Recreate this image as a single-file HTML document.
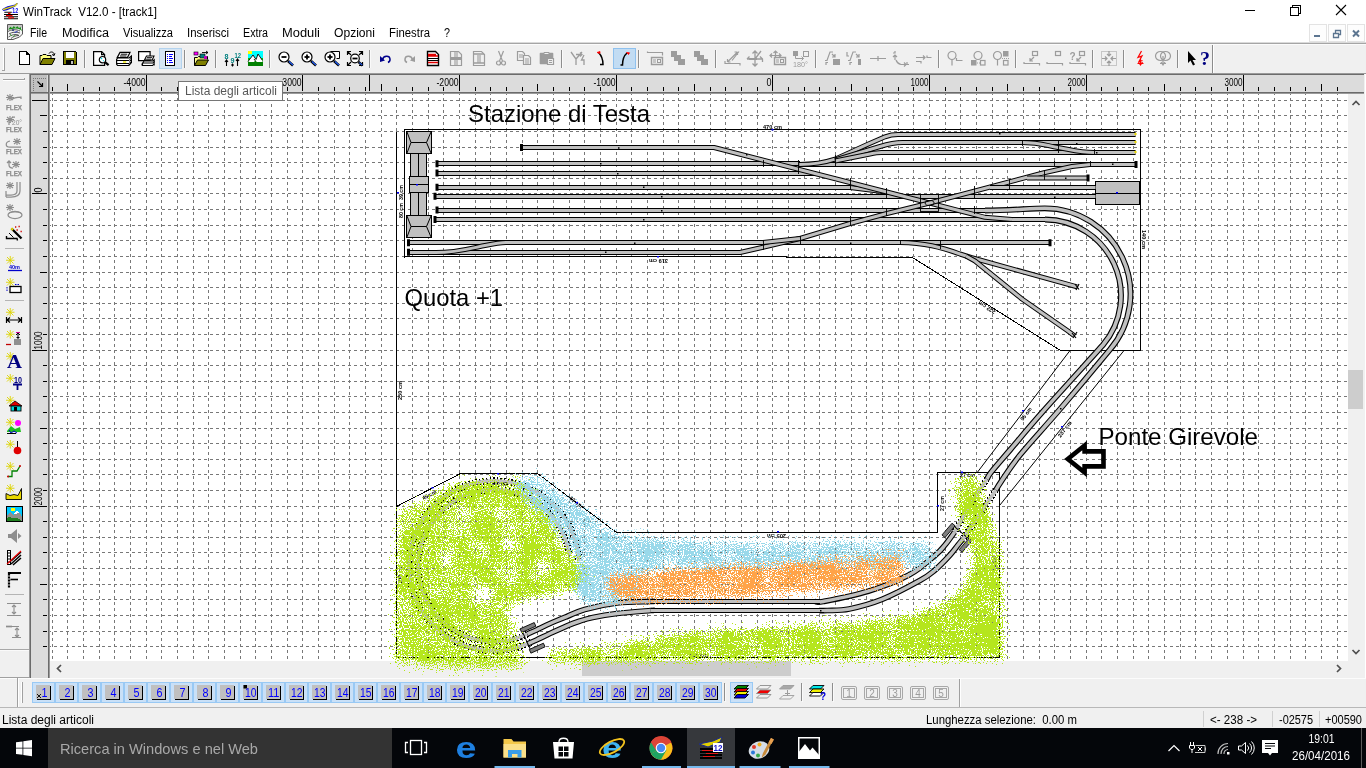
<!DOCTYPE html>
<html lang="it"><head><meta charset="utf-8"><title>WinTrack V12.0 - [track1]</title>
<style>
html,body{margin:0;padding:0;background:#fff;overflow:hidden}
svg{will-change:transform;display:block;position:absolute;left:0;top:0;font-family:"Liberation Sans", "DejaVu Sans", sans-serif}
</style></head><body>
<svg width="1366" height="768" viewBox="0 0 1366 768">
<rect x="0" y="0" width="1366" height="768" fill="#fff"/>
<g id="ticon"><path d="M4.300 12.300h7.500M4 14.500h14M4 16.700h14M4 18.700h14" stroke="#000" stroke-width="1.100" fill="none"/><path d="M8 13.400h2.500M6 15.600h6.500M8 17.700h6M9 18.300h2" stroke="#f00000" stroke-width="1.100" fill="none"/><path d="M2 9.200L4 8L7.500 6.300L12 5.200L15 4.600L16.600 3L18 3.400L15.500 6.300L12.600 8L7 10.300L3.400 10.900Z" fill="#1010d8"/><path d="M3 9.600L7.500 8.200L12.300 6.600L15.500 5.500L17.300 3.300" stroke="#e8e000" stroke-width="1.300" fill="none"/></g>
<text x="12.300" y="12.600" font-size="6.800" font-weight="bold" fill="#0000e0" textLength="5.800" lengthAdjust="spacingAndGlyphs">12</text>
<text x="23" y="16" font-size="12" fill="#000" text-anchor="start" textLength="134" lengthAdjust="spacingAndGlyphs">WinTrack&#160; V12.0 - [track1]</text>
<g stroke="#000" stroke-width="1" fill="none" shape-rendering="crispEdges"><path d="M1245 10.5h10"/><path d="M1290.5 7.5h8v8h-8z M1292.5 7.5v-2h8v8h-2"/></g>
<path d="M1336 5l10 10M1346 5l-10 10" stroke="#000" stroke-width="1.1" fill="none"/>
<g><path d="M7.500 24.500H22.500V34L19.500 37L13 39.500H7.500Z" fill="#f4f4f4" stroke="#555" stroke-width="1"/><path d="M8 24.900h14v2.500l-2 .8-2-1.300-2 .8-2.500-1.500-2.500 1.500-3 1.800z" fill="#c4c4c4"/><path d="M8 29.800l2.500-3 1.500 1.200 1.800-2 1.700 1.700 1.800-1.500 1.800 1.800 1.500-1 1.400 4-1.500-1.200-2.500-1-3-.2-3 .5z" fill="#1a8a1a"/><path d="M8 31.500c3-2 8-2.500 12-.5M9 34c3-2 7-2.500 11-1M8.500 37c3-2.500 7-3 10-2M11 38.500c2-2 5-3 8-3" fill="none" stroke="#444" stroke-width=".9"/><path d="M12 29.500h2v1.200h-2z" fill="#102070"/><path d="M14.500 32.500l3-1" stroke="#2030c0" stroke-width="1"/><path d="M10 34l2 2M13 36.500l2-1" stroke="#2a9a2a" stroke-width=".8"/></g>
<text x="30" y="37" font-size="12" fill="#000" text-anchor="start" textLength="17" lengthAdjust="spacingAndGlyphs">File</text>
<text x="62" y="37" font-size="12" fill="#000" text-anchor="start" textLength="47" lengthAdjust="spacingAndGlyphs">Modifica</text>
<text x="123" y="37" font-size="12" fill="#000" text-anchor="start" textLength="50" lengthAdjust="spacingAndGlyphs">Visualizza</text>
<text x="187" y="37" font-size="12" fill="#000" text-anchor="start" textLength="42" lengthAdjust="spacingAndGlyphs">Inserisci</text>
<text x="243" y="37" font-size="12" fill="#000" text-anchor="start" textLength="25" lengthAdjust="spacingAndGlyphs">Extra</text>
<text x="282" y="37" font-size="12" fill="#000" text-anchor="start" textLength="38" lengthAdjust="spacingAndGlyphs">Moduli</text>
<text x="334" y="37" font-size="12" fill="#000" text-anchor="start" textLength="41" lengthAdjust="spacingAndGlyphs">Opzioni</text>
<text x="389" y="37" font-size="12" fill="#000" text-anchor="start" textLength="41" lengthAdjust="spacingAndGlyphs">Finestra</text>
<text x="444" y="37" font-size="12" fill="#000" text-anchor="start" textLength="6" lengthAdjust="spacingAndGlyphs">?</text>
<rect x="1309.5" y="24.5" width="17" height="17" fill="#fdfdfd" stroke="#e3e3e3"/>
<rect x="1328.5" y="24.5" width="17" height="17" fill="#fdfdfd" stroke="#e3e3e3"/>
<rect x="1347.5" y="24.5" width="17" height="17" fill="#fdfdfd" stroke="#e3e3e3"/>
<g stroke="#5c7590" fill="none"><path d="M1314 36h6" stroke-width="2"/><path d="M1333.5 33.5h5v4h-5z M1335.5 33v-2.5h5v4h-2" stroke-width="1.3"/><path d="M1353 30.5l6 6M1359 30.5l-6 6" stroke-width="2"/></g>
<rect x="0" y="42" width="1366" height="32" fill="#f0f0f0"/>
<rect x="0" y="42" width="1366" height="1" fill="#dadada"/>
<rect x="0" y="43" width="1366" height="1" fill="#a5a5a5"/>
<rect x="0" y="44" width="1366" height="1" fill="#fbfbfb"/>
<rect x="0" y="73" width="1366" height="1" fill="#9a9a9a"/>
<rect x="3" y="48" width="1" height="22" fill="#fff"/><rect x="4" y="48" width="1" height="22" fill="#a0a0a0"/>
<rect x="2" y="70" width="3" height="1" fill="#a0a0a0"/>
<rect x="1212" y="45" width="1" height="28" fill="#8c8c8c"/><rect x="1213" y="45" width="1" height="28" fill="#fff"/>
<rect x="84" y="50" width="1" height="18" fill="#8e8e8e"/><rect x="85" y="50" width="1" height="18" fill="#fafafa"/>
<rect x="184" y="50" width="1" height="18" fill="#8e8e8e"/><rect x="185" y="50" width="1" height="18" fill="#fafafa"/>
<rect x="215" y="50" width="1" height="18" fill="#8e8e8e"/><rect x="216" y="50" width="1" height="18" fill="#fafafa"/>
<rect x="269" y="50" width="1" height="18" fill="#8e8e8e"/><rect x="270" y="50" width="1" height="18" fill="#fafafa"/>
<rect x="369" y="50" width="1" height="18" fill="#8e8e8e"/><rect x="370" y="50" width="1" height="18" fill="#fafafa"/>
<rect x="561" y="50" width="1" height="18" fill="#8e8e8e"/><rect x="562" y="50" width="1" height="18" fill="#fafafa"/>
<rect x="638" y="50" width="1" height="18" fill="#8e8e8e"/><rect x="639" y="50" width="1" height="18" fill="#fafafa"/>
<rect x="715" y="50" width="1" height="18" fill="#8e8e8e"/><rect x="716" y="50" width="1" height="18" fill="#fafafa"/>
<rect x="815" y="50" width="1" height="18" fill="#8e8e8e"/><rect x="816" y="50" width="1" height="18" fill="#fafafa"/>
<rect x="938" y="50" width="1" height="18" fill="#8e8e8e"/><rect x="939" y="50" width="1" height="18" fill="#fafafa"/>
<rect x="1015" y="50" width="1" height="18" fill="#8e8e8e"/><rect x="1016" y="50" width="1" height="18" fill="#fafafa"/>
<rect x="1092" y="50" width="1" height="18" fill="#8e8e8e"/><rect x="1093" y="50" width="1" height="18" fill="#fafafa"/>
<rect x="1123" y="50" width="1" height="18" fill="#8e8e8e"/><rect x="1124" y="50" width="1" height="18" fill="#fafafa"/>
<rect x="1177" y="50" width="1" height="18" fill="#8e8e8e"/><rect x="1178" y="50" width="1" height="18" fill="#fafafa"/>
<rect x="159.5" y="48.5" width="22" height="20" fill="#d5e5f3" stroke="#b4d3ee"/>
<rect x="613.5" y="48.5" width="22" height="20" fill="#c2dcf3" stroke="#8fc1ee"/>
<g transform="translate(16.5,51)" shape-rendering="crispEdges"><path d="M2.5 .5h7l3 3v10h-10z" fill="#fff" stroke="#000"/><path d="M9.5 .5v3h3" fill="none" stroke="#000"/></g>
<g transform="translate(39.5,51)"><path d="M.5 13.500v-9h2l1-1h3l1 1h4v3" fill="#ffff80" stroke="#000"/><path d="M.5 13.5l3-6h12l-3 6z" fill="#808000" stroke="#000"/><path d="M9.5 2.5c1-2 4-2 5 0l0 2m-2-1l2 1 1-2" fill="none" stroke="#000"/></g>
<g transform="translate(62,51)" shape-rendering="crispEdges"><path d="M1.5 .5h12l1 1v12h-13z" fill="#808000" stroke="#000"/><rect x="4" y="1" width="8" height="6" fill="#fff"/><rect x="4" y="9" width="8" height="4" fill="#000"/><rect x="9" y="10" width="2" height="3" fill="#c0c0c0"/></g>
<g transform="translate(93,51)"><path d="M.6 .6h8l3 3v10.800h-11z" fill="#fff" stroke="#000" stroke-width="1.200"/><path d="M8.600 .6v3h3" fill="none" stroke="#000" stroke-width="1.200"/><circle cx="9.500" cy="8.700" r="3.200" fill="#fff" stroke="#000" stroke-width="1.200"/><path d="M8 8l1-1M10 10l.8-.5" stroke="#00e0f0" stroke-width="1.300"/><path d="M12 11.200l3.600 3" stroke="#000" stroke-width="2.200"/></g>
<g transform="translate(116,51)"><path d="M1.200 6.600l2.800-5.200h10l-2.600 5.200z" fill="#fff" stroke="#000" stroke-width="1.200"/><path d="M4.800 3.200h6.500M4 5h6.500" stroke="#000" stroke-width="1"/><path d="M.6 8.500l1-1.500h11.600l2.200-2v6.500l-2.500 3h-11.300l-1-1.200z" fill="#fff" stroke="#000" stroke-width="1.200"/><path d="M.6 9.500h12.600M1 12.500h12M13 9.500l2.300-2.500M12.900 14l2.300-2.800M13.500 10.500l1.500-1.500M13.500 12l1.500-1.500" stroke="#000" stroke-width="1" fill="none"/><path d="M7 11h3.200" stroke="#f0e800" stroke-width="1.400"/></g>
<g transform="translate(139,51)"><path d="M-.4 .6h11.500v9h-11.500z" fill="#fff" stroke="#000" stroke-width="1.200"/><path d="M5.500 9l2-4h7.500l-1.800 4z" fill="#fff" stroke="#000" stroke-width="1.100"/><path d="M8 6.500h5M7.300 8h5" stroke="#000" stroke-width=".8"/><path d="M3.500 12.500l1.500-2.500h9l1.200-1.200v3.500l-1.500 2.200h-10.200z" fill="#fff" stroke="#000" stroke-width="1.100"/><path d="M3.500 12h10.500M14 12l1.200-1.500M3 14.500v-2M15.200 14.500v-1.500" stroke="#000" stroke-width="1" fill="none"/></g>
<g transform="translate(162,51)" shape-rendering="crispEdges"><path d="M3.500 .5h9v14h-9z" fill="#fff" stroke="#000"/><path d="M5 3h1M7 3h4M5 5h1M7 5h3M5 7h1M7 7h4M5 9h1M7 9h3M5 11h1M7 11h4" stroke="#00f" stroke-width="1"/></g>
<g transform="translate(193,51)"><path d="M1.500 14.500v-8h3l1-1h9v3" fill="#ffff80" stroke="#000"/><path d="M1.500 14.500l3-5.500h11l-3 5.500z" fill="#808000" stroke="#000"/><rect x="1" y="1" width="4" height="3" fill="#f0f" stroke="#000" stroke-width=".6"/><rect x="7" y="3" width="5" height="4" fill="#008080" stroke="#000" stroke-width=".6"/><rect x="11" y="5" width="3" height="3" fill="#c000c0"/><path d="M9 1.500h6m-2-1.500l2 1.500-2 1.500" fill="none" stroke="#000" stroke-width=".9"/></g>
<g font-size="7" font-weight="bold" fill="#008080"><text x="224.500" y="59" textLength="4" lengthAdjust="spacingAndGlyphs">8</text><text x="230.500" y="63" textLength="4" lengthAdjust="spacingAndGlyphs">9</text><text x="234.500" y="58" textLength="6.500" lengthAdjust="spacingAndGlyphs">12</text></g>
<path d="M226.500 66v-6m-1.500 2l1.500-2 1.500 2M237.500 66v-7m-1.500 2l1.500-2 1.500 2M232.500 63.500v3m-1.500-1.500h3" stroke="#000" fill="none" stroke-width="1.100"/>
<g transform="translate(247,51)"><rect x="1" y="0" width="15" height="15" fill="#00c000"/><rect x="1" y="0" width="15" height="7" fill="#0ff"/><rect x="1" y="0" width="4" height="3" fill="#ff0"/><path d="M1 10l5-6 3 4 2-5 5 7v1h-15z" fill="#fff"/><path d="M1 10.500l5-6.500 3 4.500 2-5.500 4.500 6.500M7 8l3 4" fill="none" stroke="#000" stroke-width=".9"/><rect x="1" y="10" width="15" height="5" fill="#008000"/><path d="M1 11l4-3 3 3M9 11l3-4 4 4z" fill="#fff"/></g>
<g transform="translate(278,51)"><circle cx="6" cy="6" r="5" fill="#fff" stroke="#000" stroke-width="1.200"/><path d="M3.500 6h5" stroke="#000" stroke-width="1.800"/><path d="M10 10l5 4.500" stroke="#000" stroke-width="2.600"/><path d="M11 10.500l4 3.600" stroke="#2060ff" stroke-width="1.200"/></g>
<g transform="translate(301,51)"><circle cx="6" cy="6" r="5" fill="#fff" stroke="#000" stroke-width="1.200"/><path d="M3.500 6h5" stroke="#000" stroke-width="1.800"/><path d="M6 3.500v5" stroke="#000" stroke-width="1.800"/><path d="M10 10l5 4.500" stroke="#000" stroke-width="2.600"/><path d="M11 10.500l4 3.600" stroke="#2060ff" stroke-width="1.200"/></g>
<g transform="translate(324,51)"><path d="M6.500 .5h9v7h-3" fill="#fff" stroke="#000"/><circle cx="6" cy="6" r="5" fill="#fff" stroke="#000" stroke-width="1.200"/><path d="M3.500 6h5" stroke="#000" stroke-width="1.800"/><path d="M6 3.500v5" stroke="#000" stroke-width="1.800"/><path d="M10 10l5 4.500" stroke="#000" stroke-width="2.600"/><path d="M11 10.500l4 3.600" stroke="#2060ff" stroke-width="1.200"/></g>
<g transform="translate(347,51)"><path d="M.5 4v-3.500h3.500M12 .5h3.500v3.500M15.500 11v3.500h-3.500M4 14.500h-3.500v-3.500M1 1l3 3M15 1l-3 3M1 14l3-3" fill="none" stroke="#000" stroke-width="1.200"/><circle cx="8" cy="7.500" r="4.300" fill="#fff" stroke="#000" stroke-width="1.200"/><path d="M5.500 7.500h5" stroke="#000" stroke-width="1.800"/><path d="M11.500 11l4 3.500" stroke="#000" stroke-width="2.400"/><path d="M12.300 11.600l3 2.600" stroke="#2060ff" stroke-width="1.100"/></g>
<g transform="translate(378,51)"><path d="M4.500 8.500c1-4 7-4.500 7.500-.5c.3 2-1 3-2 3.500" fill="none" stroke="#00008b" stroke-width="1.500"/><path d="M2 5l0 6 5-1.500z" fill="#00008b"/></g>
<g transform="translate(401,51)"><path d="M11.500 8.500c-1-4-7-4.500-7.500-.5c-.3 2 1 3 2 3.500" fill="none" stroke="#9c9c9c" stroke-width="1.500"/><path d="M14 5l0 6-5-1.500z" fill="#9c9c9c"/></g>
<g transform="translate(425,51)"><path d="M2.500 .5h8l3 3v11h-11z" fill="#fff" stroke="#000" stroke-width="1.400"/><path d="M3 3.500h8M3 5h10M3 11.500h10" stroke="#e00000" stroke-width="1.600"/><path d="M3 7.500h10M3 9.500h10" stroke="#000" stroke-width="1"/></g>
<g transform="translate(448,51)"><path d="M2.500 .5h8l3 3v11h-11z" fill="#f0f0f0" stroke="#9c9c9c" stroke-width="1.200"/><path d="M3 6h10v3h-10z" fill="#9c9c9c"/><path d="M6 1h4v13h-4z" fill="#9c9c9c" fill-opacity=".55"/></g>
<g transform="translate(471,51)"><path d="M2.500 .5h8l3 3v11h-11z" fill="#f0f0f0" stroke="#9c9c9c" stroke-width="1.200"/><path d="M3 3h10M3 12h10" stroke="#9c9c9c" stroke-width="1.500"/><path d="M6 4h4v8h-4z" fill="#9c9c9c" fill-opacity=".55"/></g>
<g transform="translate(493,51)"><path d="M5.500 0l4 10M10.500 0l-4 10" stroke="#9c9c9c" stroke-width="1.200" fill="none"/><circle cx="5.500" cy="12" r="2" fill="none" stroke="#9c9c9c" stroke-width="1.200"/><circle cx="10.500" cy="12" r="2" fill="none" stroke="#9c9c9c" stroke-width="1.200"/></g>
<g transform="translate(516,51)"><path d="M1.500 .5h5l2 2v7h-7z" fill="#f0f0f0" stroke="#9c9c9c" stroke-width="1.200"/><path d="M3 4h4M3 6h4" stroke="#9c9c9c"/><path d="M7.500 4.500h5l2 2v7h-7z" fill="#f0f0f0" stroke="#9c9c9c" stroke-width="1.200"/><path d="M9 8h4M9 10h4M9 12h4" stroke="#9c9c9c"/></g>
<g transform="translate(539,51)"><path d="M1.500 2.500h12v10h-12z" fill="#9c9c9c" stroke="#9c9c9c" stroke-width="1.600" stroke-linejoin="round"/><path d="M5 1.500h5v2h-5z" fill="#f0f0f0" stroke="#9c9c9c"/><path d="M8.500 7.500h6v6h-6z" fill="#f0f0f0" stroke="#9c9c9c" stroke-width="1.200"/><path d="M10 9.500h3M10 11.500h3" stroke="#9c9c9c"/></g>
<g transform="translate(570,51)"><path d="M1 1l5 7v6M12 1l-6 7M6 3.500h6m-2-2l2 2-2 2M14 4l-2.500 5h2.500v5" fill="none" stroke="#9c9c9c" stroke-width="1.300"/></g>
<g transform="translate(593,51)"><path d="M5.500 1.500c3 3 4.500 7 4.500 12h-3" fill="none" stroke="#000" stroke-width="1.500"/><path d="M4 1.500l3-1 0 2z" fill="#f00" stroke="#f00" stroke-width=".8"/></g>
<g transform="translate(616,51)"><path d="M4.500 14h2c0-5 1-9 4.500-12" fill="none" stroke="#000" stroke-width="1.500"/><path d="M10.500 1.500l3 .3-1 1.700z" fill="#f00" stroke="#f00" stroke-width=".8"/></g>
<g transform="translate(647,51)"><path d="M.5 2v-1.500M.5 1.500h15v3" fill="none" stroke="#9c9c9c" stroke-width="1.200"/><path d="M4.500 6.500h11v7h-11z" fill="#f0f0f0" stroke="#9c9c9c" stroke-width="1.400"/><path d="M6 9h3M6 11h3" stroke="#9c9c9c"/><rect x="10.500" y="8.500" width="3" height="3" fill="none" stroke="#9c9c9c"/></g>
<g transform="translate(670,51)"><path d="M1 0h6v4h4v4h4v6h-7v-4h-4v-4h-3z" fill="#9c9c9c"/></g>
<g transform="translate(693,51)"><path d="M1 0h6v4h4v4h4v6h-7v-4h-4v-4h-3z" fill="#9c9c9c"/></g>
<g transform="translate(724,51)"><path d="M1 10v2.500h15v2M3.500 11l10-10M3.500 11v-3M3.500 11h3M13.500 1v3M13.500 1h-3M8 9.500l7-9" fill="none" stroke="#9c9c9c" stroke-width="1.200"/></g>
<g transform="translate(747,51)"><path d="M8 0v15M5.500 2.500l2.500-2.500 2.500 2.500M5.500 12.500l2.500 2.500 2.500-2.500M0 8h16M13 5.500l2.500 2.500v3M2.500 5.500l-2.500 2.500M8 8l6-8" fill="none" stroke="#9c9c9c" stroke-width="1.300"/><path d="M2 7h8v2h-8z" fill="#9c9c9c"/></g>
<g transform="translate(770,51)"><path d="M5.500 0v6M3.500 2l2-2 2 2M0 4.500h11M2 2.500l-2 2 2 2M9 2.500l2 2-2 2" fill="none" stroke="#9c9c9c" stroke-width="1.200"/><path d="M4.500 6.500h11v7h-11z" fill="#f0f0f0" stroke="#9c9c9c" stroke-width="1.400"/><path d="M6 9h3M6 11h3" stroke="#9c9c9c"/><rect x="10.500" y="8.500" width="3" height="3" fill="none" stroke="#9c9c9c"/></g>
<g transform="translate(793,51)"><rect x="0" y="0" width="5" height="5" fill="#9c9c9c"/><rect x="10.500" y=".5" width="5" height="5" fill="none" stroke="#9c9c9c"/><path d="M2.500 5v2.500h8m-2-2l2 2-2 2" fill="none" stroke="#9c9c9c"/></g>
<text x="793" y="66.500" font-size="7" fill="#9c9c9c" textLength="15" lengthAdjust="spacingAndGlyphs">180&#176;</text>
<g transform="translate(824,51)"><path d="M1 9.500h2l3-8.500h3M2 14v-2.500h2M8 3l3 3m0-3v3h-3" fill="none" stroke="#9c9c9c" stroke-width="1.200"/><rect x="9" y="8" width="7" height="6" fill="#9c9c9c"/></g>
<g transform="translate(847,51)"><path d="M0 1v4h2M1 9.500h2l3-8.500h3M3 14v-2.500h2M9 3l3 3m0-3v3h-3" fill="none" stroke="#9c9c9c" stroke-width="1.200"/><rect x="11" y="8" width="3" height="6" fill="#9c9c9c"/></g>
<g transform="translate(870,51)"><path d="M0 7.500h16M8 5v5" stroke="#9c9c9c" stroke-width="1.200" fill="none"/></g>
<g transform="translate(893,51)"><path d="M2 0v2h-2M2 9v-5m-2 2l2-2 2 2M3 9c1 3 3 4 5 4.500h5m-2-2l2 2-2 2M14 11v2.500h2" fill="none" stroke="#9c9c9c" stroke-width="1.200"/></g>
<g transform="translate(916,51)"><path d="M0 6.500h9m-2-2l2 2-2 2M0 10.500h5v2M11 4.500v2h4.500" fill="none" stroke="#9c9c9c" stroke-width="1.200"/></g>
<g transform="translate(947,51)"><circle cx="5" cy="4.500" r="4" fill="none" stroke="#9c9c9c" stroke-width="1.200"/><path d="M5 8.500v6M9.500 7v2.500h6" fill="none" stroke="#9c9c9c" stroke-width="1.200"/></g>
<g transform="translate(970,51)"><circle cx="8" cy="4.500" r="4" fill="none" stroke="#9c9c9c" stroke-width="1.200"/><rect x="1" y="9" width="5.500" height="5.500" fill="#9c9c9c"/><rect x="10.500" y="9.500" width="4.500" height="4.500" fill="none" stroke="#9c9c9c" stroke-width="1.200"/><path d="M7 12h3" stroke="#9c9c9c" stroke-dasharray="1 1"/></g>
<g transform="translate(993,51)"><circle cx="4.500" cy="4.500" r="4" fill="none" stroke="#9c9c9c" stroke-width="1.200"/><path d="M4.500 8.500v6" stroke="#9c9c9c" stroke-width="1.200"/><rect x="10" y="0" width="5.500" height="5.500" fill="#9c9c9c"/><rect x="10.500" y="9.500" width="4.500" height="4.500" fill="none" stroke="#9c9c9c" stroke-width="1.200"/><path d="M9 7.500h7" stroke="#9c9c9c" stroke-dasharray="1 1"/></g>
<g transform="translate(1024,51)"><rect x="8.500" y=".5" width="5" height="4" fill="none" stroke="#9c9c9c" stroke-width="1.200"/><path d="M10 6l-4 4m0-3v3h3M0 11v1.500h15.500v2" fill="none" stroke="#9c9c9c" stroke-width="1.200"/></g>
<g transform="translate(1047,51)"><rect x="8.500" y=".5" width="5" height="4" fill="none" stroke="#9c9c9c" stroke-width="1.200"/><path d="M0 11v1.500h15.500v2" fill="none" stroke="#9c9c9c" stroke-width="1.200"/></g>
<g transform="translate(1070,51)"><rect x="9.500" y=".5" width="5" height="4" fill="none" stroke="#9c9c9c" stroke-width="1.200"/><path d="M11 6l-4 4m0-3v3h3M0 11v1.500h15.500v2" fill="none" stroke="#9c9c9c" stroke-width="1.200"/></g>
<text x="1069.500" y="60" font-size="10" font-weight="bold" fill="#9c9c9c">?</text>
<g transform="translate(1101,51)"><rect x=".5" y=".5" width="15" height="14" fill="none" stroke="#9c9c9c" stroke-dasharray="1 1"/><path d="M8 0v5m-2-2l2 2 2-2M8 15v-5m-2 2l2-2 2 2M1 7.500h5m-2-2l2 2-2 2M15 7.500h-5m2-2l-2 2 2 2" fill="none" stroke="#9c9c9c" stroke-width="1.200"/></g>
<g transform="translate(1132,51)"><path d="M9.500 0l-3.500 6.500 4-1.500-3 5.500 3.500-1M8.500 8v6.500M5.500 12.500h6m-5-1.500l2 3 2-3" fill="none" stroke="#f00" stroke-width="1.200"/></g>
<g transform="translate(1155,51)"><ellipse cx="5.500" cy="5" rx="5" ry="4.500" fill="none" stroke="#9c9c9c" stroke-width="1.200"/><ellipse cx="10.500" cy="5" rx="5" ry="4.500" fill="none" stroke="#9c9c9c" stroke-width="1.200"/><path d="M8 5v9.500M5 12.500h6m-5-1.500l2 3 2-3" fill="none" stroke="#9c9c9c" stroke-width="1.200"/></g>
<g transform="translate(1186,51)"><path d="M2 0v12l2.500-2.500 2.500 5 2-1-2.500-4.500h3.500z" fill="#000"/></g>
<text x="1200" y="64.500" font-size="18" font-weight="bold" fill="#000080" font-family="Liberation Serif, serif" textLength="10" lengthAdjust="spacingAndGlyphs">?</text>
<rect x="0" y="74" width="31" height="604" fill="#f0f0f0"/>
<rect x="0" y="677" width="30" height="1" fill="#a0a0a0"/>
<rect x="0" y="649" width="29" height="1" fill="#a8a8a8"/><rect x="0" y="650" width="29" height="1" fill="#fafafa"/>
<rect x="3" y="79" width="21" height="1" fill="#a0a0a0"/><rect x="3" y="80" width="22" height="1" fill="#fff"/><rect x="24" y="78" width="1" height="2" fill="#a0a0a0"/>
<g transform="translate(6,94)"><path d="M1 1l6 5M7 1l-6 5M4 0v7M0 3.500h8" stroke="#8e8e8e" stroke-width="1.150" fill="none"/><path d="M5 6c3-3 6-3 10-3v2" fill="none" stroke="#8e8e8e" stroke-width="1.250"/><text x="0" y="15.500" font-size="6.500" font-weight="bold" fill="#8e8e8e" stroke="#8e8e8e" stroke-width=".25" textLength="16" lengthAdjust="spacingAndGlyphs">FLEX</text></g>
<g transform="translate(6,116)"><path d="M1 1l6 5M7 1l-6 5M4 0v7M0 3.500h8" stroke="#8e8e8e" stroke-width="1.150" fill="none"/><path d="M3 9v-3h2M6 1h3" fill="none" stroke="#8e8e8e" stroke-width="1.250"/><text x="6" y="9" font-size="7" fill="#8e8e8e" textLength="10" lengthAdjust="spacingAndGlyphs">20&#176;</text><text x="0" y="15.500" font-size="6.500" font-weight="bold" fill="#8e8e8e" stroke="#8e8e8e" stroke-width=".25" textLength="16" lengthAdjust="spacingAndGlyphs">FLEX</text></g>
<g transform="translate(6,138)"><g transform="translate(7,0)"><path d="M1 1l6 5M7 1l-6 5M4 0v7M0 3.500h8" stroke="#8e8e8e" stroke-width="1.150" fill="none"/></g><path d="M4 3c-5 1-5 6 0 6h11" fill="none" stroke="#8e8e8e" stroke-width="1.250"/><text x="0" y="15.500" font-size="6.500" font-weight="bold" fill="#8e8e8e" stroke="#8e8e8e" stroke-width=".25" textLength="16" lengthAdjust="spacingAndGlyphs">FLEX</text></g>
<g transform="translate(6,160)"><g transform="translate(6,1)"><path d="M1 1l6 5M7 1l-6 5M4 0v7M0 3.500h8" stroke="#8e8e8e" stroke-width="1.150" fill="none"/></g><path d="M1 3l2-2 2 2M3 1v4c0 2 2 3 4 3" fill="none" stroke="#8e8e8e" stroke-width="1.250"/><text x="0" y="15.500" font-size="6.500" font-weight="bold" fill="#8e8e8e" stroke="#8e8e8e" stroke-width=".25" textLength="16" lengthAdjust="spacingAndGlyphs">FLEX</text></g>
<g transform="translate(6,182)"><path d="M1 1l6 5M7 1l-6 5M4 0v7M0 3.500h8" stroke="#8e8e8e" stroke-width="1.150" fill="none"/><path d="M11 0v9c0 3-3 4-6 4h-5M14 0v9c0 5-5 6-9 6h-5M0 9v6" fill="none" stroke="#8e8e8e" stroke-width="1.250"/></g>
<g transform="translate(6,204)"><path d="M1 1l6 5M7 1l-6 5M4 0v7M0 3.500h8" stroke="#8e8e8e" stroke-width="1.150" fill="none"/><ellipse cx="9" cy="11" rx="7" ry="3.500" fill="none" stroke="#8e8e8e" stroke-width="1.250"/><path d="M3 9c4-2 8-2 12 0" fill="none" stroke="#8e8e8e" stroke-width="1.250"/></g>
<g transform="translate(6,226)"><path d="M5.500 2.500L15.500 12.500" stroke="#000" stroke-width="2.300" fill="none"/><path d="M5.300 2.300l1.700 1.700" stroke="#e8d800" stroke-width="2" fill="none"/><path d="M.5 10v2.500h10.500l.5 2" fill="none" stroke="#000" stroke-width="1.400"/><path d="M3 7l4.500 4.500" stroke="#000" stroke-width="1" fill="none"/><path d="M9 1h1.300M12.500 .5h1.300M10.500 4h1.300M14.500 5.500h1.300" stroke="#d00000" stroke-width="1.300"/></g>
<rect x="5" y="248" width="19" height="1" fill="#b4b4b4"/>
<g transform="translate(6,256)"><path d="M1 1l6.500 6.500M7.500 1l-6.500 6.500M4.250 0v8.500M0 4.250h8.500" stroke="#dcd400" stroke-width=".9" fill="none"/><path d="M2 14.500h14" stroke="#00c" stroke-width="1.300"/><text x="3" y="12.500" font-size="5" font-weight="bold" fill="#00c" textLength="11" lengthAdjust="spacingAndGlyphs">40m</text></g>
<g transform="translate(6,278)"><path d="M1 1l6.500 6.500M7.500 1l-6.500 6.500M4.250 0v8.500M0 4.250h8.500" stroke="#dcd400" stroke-width=".9" fill="none"/><rect x="4" y="8.500" width="11" height="6" fill="#fff" stroke="#000" stroke-width="1.300"/><path d="M9 6.500h4M1 9v4" stroke="#00c" stroke-dasharray="1.500 1"/></g>
<rect x="5" y="300" width="19" height="1" fill="#b4b4b4"/>
<g transform="translate(6,308)"><path d="M1 1l6.500 6.500M7.500 1l-6.500 6.500M4.250 0v8.500M0 4.250h8.500" stroke="#dcd400" stroke-width=".9" fill="none"/><path d="M.5 9v6M15.500 9v6M1 12h14M4 9.500l-3 2.500 3 2.500M12 9.500l3 2.500-3 2.500" fill="none" stroke="#000" stroke-width="1.200"/></g>
<g transform="translate(6,330)"><path d="M1 1l6.500 6.500M7.500 1l-6.500 6.500M4.250 0v8.500M0 4.250h8.500" stroke="#dcd400" stroke-width=".9" fill="none"/><rect x="8" y="9" width="7" height="6" fill="#909090"/><path d="M12 2v7M10 5l2-2 2 2M10.500 7.500h3" stroke="#000" fill="none"/><path d="M10 2.500h4" stroke="#d00090"/><path d="M0 14.500h5" stroke="#c00000" stroke-width="1.300"/></g>
<g transform="translate(6,352)"><path d="M1 1l6.500 6.500M7.500 1l-6.500 6.500M4.250 0v8.500M0 4.250h8.500" stroke="#dcd400" stroke-width=".9" fill="none"/></g>
<text x="7" y="368" font-size="19" font-weight="bold" fill="#000080" font-family="Liberation Serif, serif" textLength="15" lengthAdjust="spacingAndGlyphs">A</text>
<g transform="translate(6,374)"><path d="M1 1l6.500 6.500M7.500 1l-6.500 6.500M4.250 0v8.500M0 4.250h8.500" stroke="#dcd400" stroke-width=".9" fill="none"/><path d="M7 10.500h9M11.500 10.500v5.500" stroke="#000080" stroke-width="1.800" fill="none"/><text x="8" y="8.500" font-size="9" font-weight="bold" fill="#000080" textLength="8" lengthAdjust="spacingAndGlyphs">10</text></g>
<g transform="translate(6,396)"><path d="M1 1l6.500 6.500M7.500 1l-6.500 6.500M4.250 0v8.500M0 4.250h8.500" stroke="#dcd400" stroke-width=".9" fill="none"/><path d="M3 10l6-5 7 5z" fill="#e00000" stroke="#000" stroke-width=".8"/><rect x="5" y="10" width="10" height="5" fill="#00d8d8" stroke="#000" stroke-width=".9"/><rect x="8" y="11" width="3" height="4" fill="#000"/></g>
<g transform="translate(6,418)"><path d="M1 1l6.500 6.500M7.500 1l-6.500 6.500M4.250 0v8.500M0 4.250h8.500" stroke="#dcd400" stroke-width=".9" fill="none"/><path d="M1 13l4-5 4 3 5-2 1 5h-14z" fill="#20c020"/><circle cx="12" cy="5" r="3" fill="#f0f"/><path d="M3 12l2 3 3-2 3 2" stroke="#00c" fill="none"/><path d="M1 15.500h9" stroke="#000"/></g>
<g transform="translate(6,440)"><path d="M1 1l6.500 6.500M7.500 1l-6.500 6.500M4.250 0v8.500M0 4.250h8.500" stroke="#dcd400" stroke-width=".9" fill="none"/><circle cx="11.500" cy="10.500" r="3.800" fill="#e00000"/><path d="M11.500 1v6" stroke="#000"/></g>
<g transform="translate(6,462)"><path d="M1 1l6.500 6.500M7.500 1l-6.500 6.500M4.250 0v8.500M0 4.250h8.500" stroke="#dcd400" stroke-width=".9" fill="none"/><path d="M2 14.500h4v-5.500h5l3-5" fill="none" stroke="#008000" stroke-width="1.300"/><circle cx="2" cy="14.500" r="1" fill="#c00"/><circle cx="14" cy="4" r="1" fill="#c00"/></g>
<g transform="translate(6,484)"><path d="M1 1l6.500 6.500M7.500 1l-6.500 6.500M4.250 0v8.500M0 4.250h8.500" stroke="#dcd400" stroke-width=".9" fill="none"/><path d="M0 15.500v-6l4 2 4-1 4 1 3.500-7v11z" fill="#e8d800" stroke="#000" stroke-width=".9"/></g>
<g transform="translate(6,506)" shape-rendering="crispEdges"><rect x="0" y="0" width="16" height="15" fill="#00c8ff" stroke="#000"/><circle cx="7" cy="3.500" r="2" fill="#ff0"/><path d="M.5 14.500v-5l4-4 3 4 4-5 4 5v5z" fill="#909090"/><path d="M.5 14.500v-2l3-2 3 2 4-1 5 3z" fill="#208020"/><path d="M8 8l3-3.500 2 2.500z" fill="#fff"/></g>
<g transform="translate(6,528)"><path d="M2 6h3l6-5v14l-6-5h-3z" fill="#8e8e8e"/><path d="M12 5l3.500 3-3.500 3z" fill="#8e8e8e"/></g>
<g transform="translate(6,550)"><rect x="1.500" y=".5" width="3" height="14" fill="#fff" stroke="#000"/><path d="M2 3h3M2 6h3M2 9h3M2 12h3" stroke="#000"/><path d="M5 14l10-9M5 11l10-9M7 15l8-7" stroke="#000" stroke-width="1.500"/><path d="M1 14l14-13" stroke="#e00" stroke-width="1.100"/></g>
<g transform="translate(6,572)"><path d="M3 15.500v-14.500h12" fill="none" stroke="#000" stroke-width="2.200"/><path d="M4 7.500h8" stroke="#000" stroke-width="1.600"/><path d="M2 4h3M2 7h3M2 10h3M2 13h3" stroke="#fff" stroke-width=".8"/></g>
<rect x="5" y="594" width="19" height="1" fill="#b4b4b4"/>
<g transform="translate(6,602)"><path d="M1 1.500h14M1 13.500h14M8 3v9M6 5l2-2 2 2M6 10l2 2 2-2" fill="none" stroke="#8e8e8e" stroke-width="1.100"/></g>
<g transform="translate(6,624)"><path d="M0 2.500h13M6 13.500h9M11 4v9M9 6l2-2 2 2M9 11l2 2 2-2" fill="none" stroke="#8e8e8e" stroke-width="1.100"/><path d="M1 1v3M3 1v3M5 1v3" stroke="#8e8e8e" stroke-width=".7"/></g>
<rect x="31" y="74" width="1333" height="20" fill="#dcdcdc"/>
<rect x="31" y="73" width="1333" height="1" fill="#9a9a9a"/><rect x="31" y="74" width="1333" height="1" fill="#6b6b6b"/>
<rect x="31" y="92" width="1333" height="1" fill="#6b6b6b"/><rect x="31" y="93" width="1333" height="1" fill="#9a9a9a"/>
<rect x="31" y="94" width="17" height="584" fill="#dcdcdc"/>
<rect x="29" y="74" width="1" height="604" fill="#9a9a9a"/><rect x="30" y="74" width="1" height="604" fill="#6b6b6b"/>
<rect x="48" y="75" width="1" height="603" fill="#6b6b6b"/><rect x="49" y="75" width="1" height="603" fill="#9a9a9a"/>
<rect x="31" y="75" width="16" height="17" fill="#c0c0c0"/>
<path d="M33.5 91V78.5H46" stroke="#777" stroke-dasharray="1 1" fill="none" shape-rendering="crispEdges"/>
<path d="M37.5 81.5l5 5m0-3.5v3.5h-3.5" stroke="#000" stroke-width="1.2" fill="none"/>
<path d="M52 87h1v4h-1zM67 84h1v7h-1zM83 87h1v4h-1zM99 87h1v4h-1zM114 87h1v4h-1zM130 87h1v4h-1zM146 75h1v16h-1zM161 87h1v4h-1zM177 87h1v4h-1zM193 87h1v4h-1zM208 87h1v4h-1zM224 84h1v7h-1zM240 87h1v4h-1zM255 87h1v4h-1zM271 87h1v4h-1zM287 87h1v4h-1zM302 75h1v16h-1zM318 87h1v4h-1zM334 87h1v4h-1zM349 87h1v4h-1zM365 87h1v4h-1zM381 84h1v7h-1zM396 87h1v4h-1zM412 87h1v4h-1zM428 87h1v4h-1zM443 87h1v4h-1zM459 75h1v16h-1zM475 87h1v4h-1zM490 87h1v4h-1zM506 87h1v4h-1zM522 87h1v4h-1zM537 84h1v7h-1zM553 87h1v4h-1zM569 87h1v4h-1zM584 87h1v4h-1zM600 87h1v4h-1zM616 75h1v16h-1zM631 87h1v4h-1zM647 87h1v4h-1zM663 87h1v4h-1zM678 87h1v4h-1zM694 84h1v7h-1zM710 87h1v4h-1zM725 87h1v4h-1zM741 87h1v4h-1zM757 87h1v4h-1zM772 75h1v16h-1zM788 87h1v4h-1zM804 87h1v4h-1zM819 87h1v4h-1zM835 87h1v4h-1zM851 84h1v7h-1zM866 87h1v4h-1zM882 87h1v4h-1zM898 87h1v4h-1zM913 87h1v4h-1zM929 75h1v16h-1zM945 87h1v4h-1zM960 87h1v4h-1zM976 87h1v4h-1zM992 87h1v4h-1zM1007 84h1v7h-1zM1023 87h1v4h-1zM1039 87h1v4h-1zM1054 87h1v4h-1zM1070 87h1v4h-1zM1086 75h1v16h-1zM1101 87h1v4h-1zM1117 87h1v4h-1zM1133 87h1v4h-1zM1148 87h1v4h-1zM1164 84h1v7h-1zM1180 87h1v4h-1zM1195 87h1v4h-1zM1211 87h1v4h-1zM1227 87h1v4h-1zM1243 75h1v16h-1zM1258 87h1v4h-1zM1274 87h1v4h-1zM1290 87h1v4h-1zM1305 87h1v4h-1zM1321 84h1v7h-1zM1337 87h1v4h-1zM369 75h1v16h-1z" fill="#000" shape-rendering="crispEdges"/>
<text x="145.5" y="85.5" font-size="10" fill="#000" text-anchor="end" textLength="22" lengthAdjust="spacingAndGlyphs">-4000</text>
<text x="301.5" y="85.5" font-size="10" fill="#000" text-anchor="end" textLength="22" lengthAdjust="spacingAndGlyphs">-3000</text>
<text x="458.5" y="85.5" font-size="10" fill="#000" text-anchor="end" textLength="22" lengthAdjust="spacingAndGlyphs">-2000</text>
<text x="615.5" y="85.5" font-size="10" fill="#000" text-anchor="end" textLength="22" lengthAdjust="spacingAndGlyphs">-1000</text>
<text x="771.5" y="85.5" font-size="10" fill="#000" text-anchor="end" textLength="5" lengthAdjust="spacingAndGlyphs">0</text>
<text x="928.5" y="85.5" font-size="10" fill="#000" text-anchor="end" textLength="18" lengthAdjust="spacingAndGlyphs">1000</text>
<text x="1085.5" y="85.5" font-size="10" fill="#000" text-anchor="end" textLength="18" lengthAdjust="spacingAndGlyphs">2000</text>
<text x="1242.5" y="85.5" font-size="10" fill="#000" text-anchor="end" textLength="18" lengthAdjust="spacingAndGlyphs">3000</text>
<path d="M43 100v1h4v-1zM40 115v1h7v-1zM43 131v1h4v-1zM43 147v1h4v-1zM43 162v1h4v-1zM43 178v1h4v-1zM32 193v1h15v-1zM43 209v1h4v-1zM43 225v1h4v-1zM43 240v1h4v-1zM43 256v1h4v-1zM40 272v1h7v-1zM43 287v1h4v-1zM43 303v1h4v-1zM43 318v1h4v-1zM43 334v1h4v-1zM32 350v1h15v-1zM43 365v1h4v-1zM43 381v1h4v-1zM43 396v1h4v-1zM43 412v1h4v-1zM40 428v1h7v-1zM43 443v1h4v-1zM43 459v1h4v-1zM43 474v1h4v-1zM43 490v1h4v-1zM32 506v1h15v-1zM43 521v1h4v-1zM43 537v1h4v-1zM43 552v1h4v-1zM43 568v1h4v-1zM40 584v1h7v-1zM43 599v1h4v-1zM43 615v1h4v-1zM43 631v1h4v-1zM43 646v1h4v-1zM32 100v1h15v-1z" fill="#000" shape-rendering="crispEdges"/>
<text transform="translate(41.5,192.5) rotate(-90)" font-size="10" textLength="5" lengthAdjust="spacingAndGlyphs">0</text>
<text transform="translate(41.5,349.5) rotate(-90)" font-size="10" textLength="18" lengthAdjust="spacingAndGlyphs">1000</text>
<text transform="translate(41.5,505.5) rotate(-90)" font-size="10" textLength="18" lengthAdjust="spacingAndGlyphs">2000</text>
<rect x="50" y="94" width="1298" height="567" fill="#fff"/>
<clipPath id="cv"><rect x="50" y="94" width="1298" height="567"/></clipPath>
<g clip-path="url(#cv)">
<path d="M52.5 92V662M67.5 92V662M83.5 92V662M99.5 92V662M114.5 92V662M130.5 92V662M146.5 92V662M161.5 92V662M177.5 92V662M193.5 92V662M208.5 92V662M224.5 92V662M240.5 92V662M255.5 92V662M271.5 92V662M287.5 92V662M302.5 92V662M318.5 92V662M334.5 92V662M349.5 92V662M365.5 92V662M381.5 92V662M396.5 92V662M412.5 92V662M428.5 92V662M443.5 92V662M459.5 92V662M475.5 92V662M490.5 92V662M506.5 92V662M522.5 92V662M537.5 92V662M553.5 92V662M569.5 92V662M584.5 92V662M600.5 92V662M616.5 92V662M631.5 92V662M647.5 92V662M663.5 92V662M678.5 92V662M694.5 92V662M710.5 92V662M725.5 92V662M741.5 92V662M757.5 92V662M772.5 92V662M788.5 92V662M804.5 92V662M819.5 92V662M835.5 92V662M851.5 92V662M866.5 92V662M882.5 92V662M898.5 92V662M913.5 92V662M929.5 92V662M945.5 92V662M960.5 92V662M976.5 92V662M992.5 92V662M1007.5 92V662M1023.5 92V662M1039.5 92V662M1054.5 92V662M1070.5 92V662M1086.5 92V662M1101.5 92V662M1117.5 92V662M1133.5 92V662M1148.5 92V662M1164.5 92V662M1180.5 92V662M1195.5 92V662M1211.5 92V662M1227.5 92V662M1243.5 92V662M1258.5 92V662M1274.5 92V662M1290.5 92V662M1305.5 92V662M1321.5 92V662M1337.5 92V662M48 100.5H1349M48 115.5H1349M48 131.5H1349M48 147.5H1349M48 162.5H1349M48 178.5H1349M48 193.5H1349M48 209.5H1349M48 225.5H1349M48 240.5H1349M48 256.5H1349M48 272.5H1349M48 287.5H1349M48 303.5H1349M48 318.5H1349M48 334.5H1349M48 350.5H1349M48 365.5H1349M48 381.5H1349M48 396.5H1349M48 412.5H1349M48 428.5H1349M48 443.5H1349M48 459.5H1349M48 474.5H1349M48 490.5H1349M48 506.5H1349M48 521.5H1349M48 537.5H1349M48 552.5H1349M48 568.5H1349M48 584.5H1349M48 599.5H1349M48 615.5H1349M48 631.5H1349M48 646.5H1349" stroke="#787878" stroke-width="1" stroke-dasharray="3 3" fill="none" shape-rendering="crispEdges"/>
<g stroke="#000" stroke-width="1" fill="none" shape-rendering="crispEdges"><path d="M404.500 257.500V129.500H1140.500V350.500H1060.500L912.500 257.500H786.500V256.500H404.500"/><path d="M396.500 131.500V657.500H999.500V472.500H937.500V532.500H616.500L537.500 473.500H460.500L396.500 506.500"/></g>
<g stroke="#000" stroke-width="1" fill="none"><path d="M1070 350.500L977.600 472M1124 350.500L999.800 505.200"/></g>
<g stroke="#000" stroke-width="1" fill="#c0c0c0" shape-rendering="crispEdges"><rect x="410.500" y="153.500" width="16" height="62"/><path d="M418.500 153.500v62" /><rect x="406.500" y="131.500" width="25" height="22"/><rect x="406.500" y="215.500" width="25" height="22"/><rect x="409.500" y="176.500" width="19" height="16"/><path d="M409.500 184.500h19"/><rect x="1095.500" y="181.500" width="44" height="23"/><path d="M1095.500 193.500h44"/></g>
<g stroke="#000" stroke-width="1" fill="none"><path d="M407 132l4 10.500-4 10.500M431 132l-4.500 10.500 4.500 10.500M411 142.500h15.500"/><path d="M407 216l4 10.500-4 10.500M431 216l-4.500 10.500 4.500 10.500M411 226.500h15.500"/></g>
<rect x="416" y="184" width="2" height="1.500" fill="#00f"/><rect x="1116" y="192" width="2" height="1.500" fill="#00f"/>
<path d="M531.3 642.1A85 85 0 1 1 578.9 561.3" stroke="#000" stroke-width="6.6" stroke-dasharray="1.500 2" fill="none" shape-rendering="crispEdges"/>
<path d="M531.3 642.1A85 85 0 1 1 578.9 561.3" stroke="#c0c0c0" stroke-width="3.6" fill="none"/>
<path d="M527.3 634.0A76 76 0 1 1 569.3 555.1" stroke="#000" stroke-width="6.6" stroke-dasharray="1.500 2" fill="none" shape-rendering="crispEdges"/>
<path d="M527.3 634.0A76 76 0 1 1 569.3 555.1" stroke="#c0c0c0" stroke-width="3.6" fill="none"/>
<path d="M996.0 490.0C994.2 492.7 988.8 500.3 985.0 506.0C981.2 511.7 976.7 518.5 973.0 524.0C969.3 529.5 964.5 536.7 962.8 539.2" stroke="#000" stroke-width="6.6" stroke-dasharray="1.500 2" fill="none" shape-rendering="crispEdges"/>
<path d="M996.0 490.0C994.2 492.7 988.8 500.3 985.0 506.0C981.2 511.7 976.7 518.5 973.0 524.0C969.3 529.5 964.5 536.7 962.8 539.2" stroke="#c0c0c0" stroke-width="3.6" fill="none"/>
<path d="M987.0 479.0C985.0 482.0 979.0 490.7 975.0 497.0C971.0 503.3 966.4 511.2 963.0 517.0C959.6 522.8 956.0 529.5 954.6 532.0" stroke="#000" stroke-width="6.6" stroke-dasharray="1.500 2" fill="none" shape-rendering="crispEdges"/>
<path d="M987.0 479.0C985.0 482.0 979.0 490.7 975.0 497.0C971.0 503.3 966.4 511.2 963.0 517.0C959.6 522.8 956.0 529.5 954.6 532.0" stroke="#c0c0c0" stroke-width="3.6" fill="none"/>
<path d="M437 163.500H800" stroke="#000" stroke-width="5" fill="none" stroke-linejoin="round"/>
<path d="M437 163.500H800" stroke="#c0c0c0" stroke-width="3" fill="none" stroke-linejoin="round"/>
<path d="M799 164.500H1135" stroke="#000" stroke-width="5" fill="none" stroke-linejoin="round"/>
<path d="M799 164.500H1135" stroke="#c0c0c0" stroke-width="3" fill="none" stroke-linejoin="round"/>
<path d="M437 173.500H797L816 173.500" stroke="#000" stroke-width="5" fill="none" stroke-linejoin="round"/>
<path d="M437 173.500H797L816 173.500" stroke="#c0c0c0" stroke-width="3" fill="none" stroke-linejoin="round"/>
<path d="M437 187.500H850L886 192" stroke="#000" stroke-width="5" fill="none" stroke-linejoin="round"/>
<path d="M437 187.500H850L886 192" stroke="#c0c0c0" stroke-width="3" fill="none" stroke-linejoin="round"/>
<path d="M435 196.500H1095.500" stroke="#000" stroke-width="5" fill="none" stroke-linejoin="round"/>
<path d="M435 196.500H1095.500" stroke="#c0c0c0" stroke-width="3" fill="none" stroke-linejoin="round"/>
<path d="M437 210.500H986" stroke="#000" stroke-width="5" fill="none" stroke-linejoin="round"/>
<path d="M437 210.500H986" stroke="#c0c0c0" stroke-width="3" fill="none" stroke-linejoin="round"/>
<path d="M985 210.500C1010 210.500 1030 208.300 1044.7 208.3A85.7 85.7 0 0 1 1109.9 349.7C1101.7 359.4 1076.0 390.4 1061.0 408.0C1046.0 425.6 1030.0 442.7 1020.0 455.0C1010.0 467.3 1004.9 476.1 1000.9 481.9C996.9 487.7 996.8 488.6 996.0 490.0" stroke="#000" stroke-width="5.8" fill="none" stroke-linejoin="round"/>
<path d="M985 210.500C1010 210.500 1030 208.300 1044.7 208.3A85.7 85.7 0 0 1 1109.9 349.7C1101.7 359.4 1076.0 390.4 1061.0 408.0C1046.0 425.6 1030.0 442.7 1020.0 455.0C1010.0 467.3 1004.9 476.1 1000.9 481.9C996.9 487.7 996.8 488.6 996.0 490.0" stroke="#c0c0c0" stroke-width="3.56" fill="none" stroke-linejoin="round"/>
<path d="M435 219.500H1046.0" stroke="#000" stroke-width="5" fill="none" stroke-linejoin="round"/>
<path d="M435 219.500H1046.0" stroke="#c0c0c0" stroke-width="3" fill="none" stroke-linejoin="round"/>
<path d="M1045.0 219.500A76.2 76.2 0 0 1 1102.9 345.0C1093.0 356.1 1058.5 393.9 1043.0 411.4C1027.5 428.9 1018.6 439.9 1010.0 450.0C1001.4 460.1 995.1 467.2 991.3 472.0C987.5 476.8 987.7 477.8 987.0 479.0" stroke="#000" stroke-width="5.8" fill="none" stroke-linejoin="round"/>
<path d="M1045.0 219.500A76.2 76.2 0 0 1 1102.9 345.0C1093.0 356.1 1058.5 393.9 1043.0 411.4C1027.5 428.9 1018.6 439.9 1010.0 450.0C1001.4 460.1 995.1 467.2 991.3 472.0C987.5 476.8 987.7 477.8 987.0 479.0" stroke="#c0c0c0" stroke-width="3.56" fill="none" stroke-linejoin="round"/>
<path d="M409 242.500H1049.600" stroke="#000" stroke-width="5" fill="none" stroke-linejoin="round"/>
<path d="M409 242.500H1049.600" stroke="#c0c0c0" stroke-width="3" fill="none" stroke-linejoin="round"/>
<path d="M521 147.500H714L929.600 203L985 217.300L1012 219.500" stroke="#000" stroke-width="5" fill="none" stroke-linejoin="round"/>
<path d="M521 147.500H714L929.600 203L985 217.300L1012 219.500" stroke="#c0c0c0" stroke-width="3" fill="none" stroke-linejoin="round"/>
<path d="M409 252.500H740L763 247.300L800 238.500L850 223.500L886 213.750L929.600 203L1044 172.700L1072 166.500L1090 164.500" stroke="#000" stroke-width="5" fill="none" stroke-linejoin="round"/>
<path d="M409 252.500H740L763 247.300L800 238.500L850 223.500L886 213.750L929.600 203L1044 172.700L1072 166.500L1090 164.500" stroke="#c0c0c0" stroke-width="3" fill="none" stroke-linejoin="round"/>
<path d="M763 242.500L800 238.500" stroke="#000" stroke-width="5" fill="none" stroke-linejoin="round"/>
<path d="M763 242.500L800 238.500" stroke="#c0c0c0" stroke-width="3" fill="none" stroke-linejoin="round"/>
<path d="M436 252.500C455 252.500 468 249 480 246.500C490 244.500 498 242.500 506 242.500" stroke="#000" stroke-width="5" fill="none" stroke-linejoin="round"/>
<path d="M436 252.500C455 252.500 468 249 480 246.500C490 244.500 498 242.500 506 242.500" stroke="#c0c0c0" stroke-width="3" fill="none" stroke-linejoin="round"/>
<path d="M799.500 164.500C815 164.500 825 162.500 835 159.200L867.400 144.400L885 136.800C890 135 894 134.500 898 134.500H1135.600" stroke="#000" stroke-width="5" fill="none" stroke-linejoin="round"/>
<path d="M799.500 164.500C815 164.500 825 162.500 835 159.200L867.400 144.400L885 136.800C890 135 894 134.500 898 134.500H1135.600" stroke="#c0c0c0" stroke-width="3" fill="none" stroke-linejoin="round"/>
<path d="M835 160L880 146.500C888 144 895 142.500 902.500 142.500H1135.600" stroke="#000" stroke-width="5" fill="none" stroke-linejoin="round"/>
<path d="M835 160L880 146.500C888 144 895 142.500 902.500 142.500H1135.600" stroke="#c0c0c0" stroke-width="3" fill="none" stroke-linejoin="round"/>
<path d="M835 161L870 154C875 153 878 152.500 881.400 152.500H1135.600" stroke="#000" stroke-width="5" fill="none" stroke-linejoin="round"/>
<path d="M835 161L870 154C875 153 878 152.500 881.400 152.500H1135.600" stroke="#c0c0c0" stroke-width="3" fill="none" stroke-linejoin="round"/>
<path d="M1022.500 142.500C1040 142.500 1046 145.500 1058 147.500C1070 149.500 1080 152.500 1094 152.500" stroke="#000" stroke-width="5" fill="none" stroke-linejoin="round"/>
<path d="M1022.500 142.500C1040 142.500 1046 145.500 1058 147.500C1070 149.500 1080 152.500 1094 152.500" stroke="#c0c0c0" stroke-width="3" fill="none" stroke-linejoin="round"/>
<path d="M1027 178H1087.500" stroke="#000" stroke-width="5" fill="none" stroke-linejoin="round"/>
<path d="M1027 178H1087.500" stroke="#c0c0c0" stroke-width="3" fill="none" stroke-linejoin="round"/>
<path d="M990 187.500H1095.500" stroke="#000" stroke-width="5" fill="none" stroke-linejoin="round"/>
<path d="M990 187.500H1095.500" stroke="#c0c0c0" stroke-width="3" fill="none" stroke-linejoin="round"/>
<path d="M900 242.500C925 243 940 247 960 254L971 257.500L1077 286.800" stroke="#000" stroke-width="5" fill="none" stroke-linejoin="round"/>
<path d="M900 242.500C925 243 940 247 960 254L971 257.500L1077 286.800" stroke="#c0c0c0" stroke-width="3" fill="none" stroke-linejoin="round"/>
<path d="M966 256L975 261L1022 299L1068 331L1074 335.500" stroke="#000" stroke-width="5" fill="none" stroke-linejoin="round"/>
<path d="M966 256L975 261L1022 299L1068 331L1074 335.500" stroke="#c0c0c0" stroke-width="3" fill="none" stroke-linejoin="round"/>
<path d="M954.6 532.0C953.0 534.2 948.2 541.2 945.0 545.0C941.8 548.8 941.5 550.0 935.5 555.0C929.5 560.0 920.5 568.8 909.3 574.8C898.1 580.8 882.6 586.8 868.3 591.2C853.9 595.7 832.1 599.8 823.2 601.5C814.3 603.2 816.4 601.5 815.0 601.5" stroke="#000" stroke-width="5.7" fill="none" stroke-linejoin="round"/>
<path d="M954.6 532.0C953.0 534.2 948.2 541.2 945.0 545.0C941.8 548.8 941.5 550.0 935.5 555.0C929.5 560.0 920.5 568.8 909.3 574.8C898.1 580.8 882.6 586.8 868.3 591.2C853.9 595.7 832.1 599.8 823.2 601.5C814.3 603.2 816.4 601.5 815.0 601.5" stroke="#c0c0c0" stroke-width="3.4899999999999998" fill="none" stroke-linejoin="round"/>
<path d="M962.8 539.2C962.0 540.2 960.1 542.4 958.0 545.0C955.9 547.6 953.8 550.8 950.0 555.0C946.2 559.2 940.0 565.8 935.0 570.0C930.0 574.2 929.1 575.4 920.3 580.3C911.5 585.2 893.9 594.6 882.0 599.4C870.1 604.2 858.3 607.1 849.2 609.0C840.1 610.9 832.3 610.2 827.3 610.5C822.3 610.8 820.4 610.5 819.0 610.5" stroke="#000" stroke-width="5.7" fill="none" stroke-linejoin="round"/>
<path d="M962.8 539.2C962.0 540.2 960.1 542.4 958.0 545.0C955.9 547.6 953.8 550.8 950.0 555.0C946.2 559.2 940.0 565.8 935.0 570.0C930.0 574.2 929.1 575.4 920.3 580.3C911.5 585.2 893.9 594.6 882.0 599.4C870.1 604.2 858.3 607.1 849.2 609.0C840.1 610.9 832.3 610.2 827.3 610.5C822.3 610.8 820.4 610.5 819.0 610.5" stroke="#c0c0c0" stroke-width="3.4899999999999998" fill="none" stroke-linejoin="round"/>
<path d="M652.0 601.5C651.8 601.5 656.5 601.2 650.7 601.5C644.9 601.8 628.0 601.7 617.0 603.0C606.0 604.3 593.0 607.2 584.7 609.5C576.4 611.8 572.8 614.2 567.0 616.5C561.2 618.8 555.1 621.2 550.0 623.5C544.9 625.8 540.3 628.2 536.5 630.0C532.7 631.8 528.9 633.3 527.4 634.0" stroke="#000" stroke-width="5.7" fill="none" stroke-linejoin="round"/>
<path d="M652.0 601.5C651.8 601.5 656.5 601.2 650.7 601.5C644.9 601.8 628.0 601.7 617.0 603.0C606.0 604.3 593.0 607.2 584.7 609.5C576.4 611.8 572.8 614.2 567.0 616.5C561.2 618.8 555.1 621.2 550.0 623.5C544.9 625.8 540.3 628.2 536.5 630.0C532.7 631.8 528.9 633.3 527.4 634.0" stroke="#c0c0c0" stroke-width="3.4899999999999998" fill="none" stroke-linejoin="round"/>
<path d="M652.0 610.5C651.8 610.5 656.5 610.0 650.7 610.5C644.9 611.0 626.7 612.3 617.0 613.5C607.3 614.7 598.9 616.2 592.7 617.5C586.5 618.8 584.3 619.6 580.0 621.0C575.7 622.4 572.0 623.7 567.0 625.8C562.0 627.9 555.1 631.1 550.0 633.5C544.9 635.9 540.3 638.2 536.5 640.0C532.7 641.8 528.9 643.3 527.4 644.0" stroke="#000" stroke-width="5.7" fill="none" stroke-linejoin="round"/>
<path d="M652.0 610.5C651.8 610.5 656.5 610.0 650.7 610.5C644.9 611.0 626.7 612.3 617.0 613.5C607.3 614.7 598.9 616.2 592.7 617.5C586.5 618.8 584.3 619.6 580.0 621.0C575.7 622.4 572.0 623.7 567.0 625.8C562.0 627.9 555.1 631.1 550.0 633.5C544.9 635.9 540.3 638.2 536.5 640.0C532.7 641.8 528.9 643.3 527.4 644.0" stroke="#c0c0c0" stroke-width="3.4899999999999998" fill="none" stroke-linejoin="round"/>
<path d="M820 601.500H650.700" stroke="#000" stroke-width="5" fill="none" stroke-linejoin="round"/>
<path d="M820 601.500H650.700" stroke="#c0c0c0" stroke-width="3" fill="none" stroke-linejoin="round"/>
<path d="M824 610.500H650.700" stroke="#000" stroke-width="5" fill="none" stroke-linejoin="round"/>
<path d="M824 610.500H650.700" stroke="#c0c0c0" stroke-width="3" fill="none" stroke-linejoin="round"/>
<g stroke="#000" stroke-width=".9" fill="none"><rect x="920.500" y="194.500" width="18" height="17"/><ellipse cx="929.600" cy="203" rx="4.500" ry="2.500"/><path d="M763.500 160v7M798.500 160v14M835.500 155v12M850.500 178v12M886.500 188v11M886.500 208v8M850.500 216v9M800.500 236v9M763.500 240v10M974.500 186v12M974.500 206v8M1009.500 179v10M1044.500 170v10M1054.500 161v6M1090.500 161v6M900.500 240v5M940.500 240v9M1022.500 141v5M1058.500 141v12M1094.500 149v5"/></g>
<path d="M520.0 144.0h3v7h-3zM435.5 160.2h3v7h-3zM435.5 169.5h3v7h-3zM435.5 183.7h3v7h-3zM433.5 192.8h3v7h-3zM435.5 206.5h3v7h-3zM433.5 215.9h3v7h-3zM407.0 239.2h3v7h-3zM407.0 248.7h3v7h-3zM1134.5 161.0h3v7h-3zM1086.5 174.5h3v7h-3zM1048.5 239.2h3v7h-3z" fill="#000"/>
<path d="M1075 284l4 5.500M1079 284l-3 6M1072 333l4 5M1077 332l-4 6" stroke="#000" stroke-width="1.200" fill="none"/>
<g fill="#e8d800"><circle cx="1135.500" cy="134" r="1.200"/><circle cx="1135.500" cy="142" r="1.200"/><circle cx="1135.500" cy="152" r="1.200"/></g>
<path d="M618 147.3h1.500v1.500h-1.500zM600 163h1.500v1.500h-1.500zM617 173h1.500v1.500h-1.500zM643 186.5h1.500v1.500h-1.500zM661 196h1.500v1.500h-1.500zM661 210h1.500v1.500h-1.500zM643 219h1.500v1.500h-1.500zM634 242.5h1.500v1.500h-1.500zM605 251.5h1.500v1.500h-1.500zM746 154h1.500v1.500h-1.500zM850 242.5h1.500v1.500h-1.500zM999 133h1.500v1.500h-1.500zM1076 143h1.500v1.500h-1.500zM1096 152h1.500v1.500h-1.500zM1112 163.5h1.500v1.500h-1.500zM1065 177.5h1.500v1.500h-1.500zM1054 196.5h1.500v1.500h-1.500zM820 610h1.500v1.500h-1.500zM1060 408h1.500v1.500h-1.500z" fill="#000"/>
<g transform="translate(961.5,532.6) rotate(130.6)" stroke="#000" stroke-width=".8"><rect x="-1" y="-13.3" width="15.500" height="4" fill="#808080"/><rect x="-1" y="9.3" width="15.500" height="4" fill="#808080"/><path d="M0 -9.3V9.3" fill="none" stroke-width="1"/></g>
<g transform="translate(526.4,640.6) rotate(-24)" stroke="#000" stroke-width=".8"><rect x="-1" y="-13.3" width="15.500" height="4" fill="#808080"/><rect x="-1" y="9.3" width="15.500" height="4" fill="#808080"/><path d="M0 -9.3V9.3" fill="none" stroke-width="1"/></g>
<text x="468" y="122.3" font-size="24" fill="#000" text-anchor="start" textLength="182" lengthAdjust="spacingAndGlyphs">Stazione di Testa</text>
<text x="404.5" y="306.4" font-size="24" fill="#000" text-anchor="start" textLength="98.5" lengthAdjust="spacingAndGlyphs">Quota +1</text>
<text x="1098.5" y="444.5" font-size="24" fill="#000" text-anchor="start" textLength="159.5" lengthAdjust="spacingAndGlyphs">Ponte Girevole</text>
<path d="M1067.800 459L1084.600 445.500V451.400H1103.500V466.400H1084.600V472.500Z" fill="none" stroke="#000" stroke-width="4.600" stroke-linejoin="miter"/>
<text transform="translate(763,128.5) rotate(0)" font-size="5.5" font-weight="bold" fill="#000" textLength="19" lengthAdjust="spacingAndGlyphs">470 cm</text>
<text transform="translate(668,258.5) rotate(180)" font-size="5.5" font-weight="bold" fill="#000" textLength="19" lengthAdjust="spacingAndGlyphs">319 cm</text>
<text transform="translate(402.5,218) rotate(-90)" font-size="5.5" font-weight="bold" fill="#000" textLength="15" lengthAdjust="spacingAndGlyphs">80 cm</text>
<text transform="translate(402.5,200) rotate(-90)" font-size="5.5" font-weight="bold" fill="#000" textLength="15" lengthAdjust="spacingAndGlyphs">39 cm</text>
<text transform="translate(1141.5,230) rotate(90)" font-size="5.5" font-weight="bold" fill="#000" textLength="19" lengthAdjust="spacingAndGlyphs">140 cm</text>
<text transform="translate(996,311) rotate(212)" font-size="5.5" font-weight="bold" fill="#000" textLength="19" lengthAdjust="spacingAndGlyphs">222 cm</text>
<text transform="translate(401.5,400) rotate(-90)" font-size="5.5" font-weight="bold" fill="#000" textLength="19" lengthAdjust="spacingAndGlyphs">250 cm</text>
<text transform="translate(1023,421) rotate(-53)" font-size="5.5" font-weight="bold" fill="#000" textLength="15" lengthAdjust="spacingAndGlyphs">95 cm</text>
<text transform="translate(1060.5,438) rotate(-53)" font-size="5.5" font-weight="bold" fill="#000" textLength="19" lengthAdjust="spacingAndGlyphs">237 cm</text>
<text transform="translate(960,477) rotate(0)" font-size="5.5" font-weight="bold" fill="#000" textLength="15" lengthAdjust="spacingAndGlyphs">27 cm</text>
<text transform="translate(943.5,511) rotate(-90)" font-size="5.5" font-weight="bold" fill="#000" textLength="15" lengthAdjust="spacingAndGlyphs">27 cm</text>
<text transform="translate(786,534) rotate(180)" font-size="5.5" font-weight="bold" fill="#000" textLength="19" lengthAdjust="spacingAndGlyphs">205 cm</text>
<text transform="translate(507,481.5) rotate(180)" font-size="5.5" font-weight="bold" fill="#000" textLength="15" lengthAdjust="spacingAndGlyphs">50 cm</text>
<text transform="translate(423.5,500) rotate(-27)" font-size="5.5" font-weight="bold" fill="#000" textLength="15" lengthAdjust="spacingAndGlyphs">45 cm</text>
<text transform="translate(569,499) rotate(37)" font-size="5.5" font-weight="bold" fill="#000" textLength="15" lengthAdjust="spacingAndGlyphs">63 cm</text>
<text transform="translate(401.5,584) rotate(-90)" font-size="5.5" font-weight="bold" fill="#000" textLength="19" lengthAdjust="spacingAndGlyphs">100 cm</text>
<text transform="translate(689,656.5) rotate(0)" font-size="5.5" font-weight="bold" fill="#000" textLength="19" lengthAdjust="spacingAndGlyphs">385 cm</text>
<text transform="translate(996,570) rotate(-90)" font-size="5" font-weight="bold" fill="#000" textLength="14" lengthAdjust="spacingAndGlyphs">68 cm</text>
<path d="M771.5 129h2v1.500h-2zM657 256h2v1.500h-2zM397 192h2v1.500h-2zM1022 410h2v1.500h-2zM1061 426h2v1.500h-2zM961 471.5h2v1.500h-2zM937 505h2v1.500h-2zM777 531h2v1.500h-2zM497 473h2v1.500h-2zM431.5 487h2v1.500h-2zM576 502h2v1.500h-2zM690 657h2v1.500h-2z" fill="#00f"/>
</g>
<rect x="1348" y="94" width="16" height="584" fill="#f0f0f0"/>
<rect x="50" y="661" width="1314" height="17" fill="#f0f0f0"/>
<rect x="1348" y="370" width="15" height="39" fill="#cdcdcd"/>
<rect x="582" y="661" width="209" height="15" fill="#cdcdcd"/>
<g stroke="#505050" stroke-width="1.700" fill="none"><path d="M1352.500 105l3.500-3.500 3.500 3.500"/><path d="M1352.500 650l3.500 3.500 3.500-3.500"/><path d="M61 665l-3.500 3.500 3.500 3.500"/><path d="M1337 665l3.500 3.500-3.500 3.500"/></g>
<rect x="1364" y="74" width="1" height="604" fill="#f0f0f0"/><rect x="1365" y="74" width="1" height="604" fill="#fff"/>
<rect x="178.500" y="81.500" width="104" height="19" fill="#fff" stroke="#767676"/>
<text x="185" y="95" font-size="12" fill="#575757" text-anchor="start" textLength="92" lengthAdjust="spacingAndGlyphs">Lista degli articoli</text>
<filter id="spb" filterUnits="userSpaceOnUse" x="370" y="455" width="660" height="225" color-interpolation-filters="sRGB"><feGaussianBlur in="SourceAlpha" stdDeviation="5" result="d"/><feTurbulence type="fractalNoise" baseFrequency="0.05" numOctaves="2" seed="51" result="m0"/><feColorMatrix in="m0" type="matrix" values="0 0 0 0 0 0 0 0 0 0 0 0 0 0 0 0 1 0 0 0" result="m"/><feComposite in="d" in2="m" operator="arithmetic" k1="1.0" k2="0.5" k3="0" k4="0" result="dm"/><feTurbulence type="fractalNoise" baseFrequency="0.85" numOctaves="1" seed="11" result="n"/><feColorMatrix in="n" type="matrix" values="0 0 0 0 0 0 0 0 0 0 0 0 0 0 0 2.2 0 0 0 -0.6000000000000001" result="na"/><feComposite in="dm" in2="na" operator="arithmetic" k1="0" k2="0.5" k3="0.5" k4="0" result="s"/><feComponentTransfer in="s" result="t"><feFuncA type="linear" slope="200" intercept="-103"/></feComponentTransfer><feFlood flood-color="#99d9ea"/><feComposite in2="t" operator="in"/></filter>
<filter id="spo" filterUnits="userSpaceOnUse" x="370" y="455" width="660" height="225" color-interpolation-filters="sRGB"><feGaussianBlur in="SourceAlpha" stdDeviation="5" result="d"/><feTurbulence type="fractalNoise" baseFrequency="0.05" numOctaves="2" seed="63" result="m0"/><feColorMatrix in="m0" type="matrix" values="0 0 0 0 0 0 0 0 0 0 0 0 0 0 0 0 1 0 0 0" result="m"/><feComposite in="d" in2="m" operator="arithmetic" k1="1.0" k2="0.5" k3="0" k4="0" result="dm"/><feTurbulence type="fractalNoise" baseFrequency="0.85" numOctaves="1" seed="23" result="n"/><feColorMatrix in="n" type="matrix" values="0 0 0 0 0 0 0 0 0 0 0 0 0 0 0 2.2 0 0 0 -0.6000000000000001" result="na"/><feComposite in="dm" in2="na" operator="arithmetic" k1="0" k2="0.5" k3="0.5" k4="0" result="s"/><feComponentTransfer in="s" result="t"><feFuncA type="linear" slope="200" intercept="-103"/></feComponentTransfer><feFlood flood-color="#ffa348"/><feComposite in2="t" operator="in"/></filter>
<filter id="spy" filterUnits="userSpaceOnUse" x="370" y="455" width="660" height="225" color-interpolation-filters="sRGB"><feGaussianBlur in="SourceAlpha" stdDeviation="5" result="d"/><feTurbulence type="fractalNoise" baseFrequency="0.05" numOctaves="2" seed="71" result="m0"/><feColorMatrix in="m0" type="matrix" values="0 0 0 0 0 0 0 0 0 0 0 0 0 0 0 0 1 0 0 0" result="m"/><feComposite in="d" in2="m" operator="arithmetic" k1="1.0" k2="0.5" k3="0" k4="0" result="dm"/><feTurbulence type="fractalNoise" baseFrequency="0.85" numOctaves="1" seed="31" result="n"/><feColorMatrix in="n" type="matrix" values="0 0 0 0 0 0 0 0 0 0 0 0 0 0 0 2.2 0 0 0 -0.6000000000000001" result="na"/><feComposite in="dm" in2="na" operator="arithmetic" k1="0" k2="0.5" k3="0.5" k4="0" result="s"/><feComponentTransfer in="s" result="t"><feFuncA type="linear" slope="200" intercept="-103"/></feComponentTransfer><feFlood flood-color="#efe4b0"/><feComposite in2="t" operator="in"/></filter>
<filter id="spg" filterUnits="userSpaceOnUse" x="370" y="455" width="660" height="225" color-interpolation-filters="sRGB"><feGaussianBlur in="SourceAlpha" stdDeviation="5" result="d"/><feTurbulence type="fractalNoise" baseFrequency="0.05" numOctaves="2" seed="45" result="m0"/><feColorMatrix in="m0" type="matrix" values="0 0 0 0 0 0 0 0 0 0 0 0 0 0 0 0 1 0 0 0" result="m"/><feComposite in="d" in2="m" operator="arithmetic" k1="1.0" k2="0.5" k3="0" k4="0" result="dm"/><feTurbulence type="fractalNoise" baseFrequency="0.85" numOctaves="1" seed="5" result="n"/><feColorMatrix in="n" type="matrix" values="0 0 0 0 0 0 0 0 0 0 0 0 0 0 0 2.2 0 0 0 -0.6000000000000001" result="na"/><feComposite in="dm" in2="na" operator="arithmetic" k1="0" k2="0.5" k3="0.5" k4="0" result="s"/><feComponentTransfer in="s" result="t"><feFuncA type="linear" slope="200" intercept="-103"/></feComponentTransfer><feFlood flood-color="#b5e61d"/><feComposite in2="t" operator="in"/></filter>
<g filter="url(#spg)" fill="#000"><path fill-rule="evenodd" d="M397 513L458 482L518 480C536 486 550 508 560 536C570 554 590 564 589 578C588 590 572 594 556 594C540 595 525 600 512 607C506 612 512 622 518 632C516 645 520 655 528 668L440 670L394 664ZM474 594a10 8 0 1 0 20 0a10 8 0 1 0 -20 0zM454 514a7 4 0 1 0 14 0a7 4 0 1 0 -14 0zM537 568a6 5 0 1 0 12 0a6 5 0 1 0 -12 0zM503 545a5 4 0 1 0 10 0a5 4 0 1 0 -10 0zM442 560a4 6 0 1 0 8 0a4 6 0 1 0 -8 0zM462 640a8 4 0 1 0 16 0a8 4 0 1 0 -16 0zM494 515a6 4 0 1 0 12 0a6 4 0 1 0 -12 0z" fill-opacity=".69"/><path d="M548 651C600 647 640 639 670 634C720 629 760 628 800 625L833 622C860 621 875 620 890 617C905 615 915 613 926 609C940 604 952 598 960 590C970 580 977 565 977 552C970 540 956 530 954 478L978 476C984 500 994 530 1001 550L1003 600L1003 660L800 660L548 664Z" fill-opacity=".75"/><path d="M968 500L990 500L998 650L900 652L940 620L965 580Z" fill-opacity=".25"/></g>
<g filter="url(#spb)" fill="#000"><path d="M513 479L540 475L616 533L700 541L935 541L936 568L800 571L660 571L640 576L640 598L610 607L582 603L572 588L578 564L566 540L546 520L523 500Z" fill-opacity=".66"/></g>
<g filter="url(#spy)" fill="#000"><path d="M640 576L900 560L903 582L720 596L650 598Z" fill-opacity=".4"/></g>
<g filter="url(#spo)" fill="#000"><path d="M606 574C700 568 820 560 903 555L906 584L820 592L720 599L650 601L610 599Z" fill-opacity=".69"/></g>
<rect x="0" y="678" width="1366" height="30" fill="#f0f0f0"/><rect x="0" y="678" width="1366" height="1" fill="#fcfcfc"/>
<rect x="17" y="678" width="1" height="29" fill="#a0a0a0"/><rect x="18" y="678" width="1" height="29" fill="#fff"/>
<rect x="21" y="682" width="1" height="21" fill="#fff"/><rect x="22" y="682" width="1" height="21" fill="#a0a0a0"/>

<rect x="32.500" y="682.500" width="22" height="20" fill="#c9e0f7" stroke="#99c9f4"/>
<rect x="36" y="685" width="14" height="14" fill="#c0c0c0"/>
<path d="M37 699.500h13.500v-14" stroke="#000" stroke-width="1" fill="none" shape-rendering="crispEdges"/>
<text x="41.5" y="697" font-size="12" fill="#00f" textLength="6" lengthAdjust="spacingAndGlyphs">1</text>
<rect x="55.500" y="682.500" width="22" height="20" fill="#c9e0f7" stroke="#99c9f4"/>
<rect x="59" y="685" width="14" height="14" fill="#c0c0c0"/>
<path d="M60 699.500h13.500v-14" stroke="#000" stroke-width="1" fill="none" shape-rendering="crispEdges"/>
<text x="64.5" y="697" font-size="12" fill="#00f" textLength="6" lengthAdjust="spacingAndGlyphs">2</text>
<rect x="78.500" y="682.500" width="22" height="20" fill="#c9e0f7" stroke="#99c9f4"/>
<rect x="82" y="685" width="14" height="14" fill="#c0c0c0"/>
<path d="M83 699.500h13.500v-14" stroke="#000" stroke-width="1" fill="none" shape-rendering="crispEdges"/>
<text x="87.5" y="697" font-size="12" fill="#00f" textLength="6" lengthAdjust="spacingAndGlyphs">3</text>
<rect x="101.500" y="682.500" width="22" height="20" fill="#c9e0f7" stroke="#99c9f4"/>
<rect x="105" y="685" width="14" height="14" fill="#c0c0c0"/>
<path d="M106 699.500h13.500v-14" stroke="#000" stroke-width="1" fill="none" shape-rendering="crispEdges"/>
<text x="110.5" y="697" font-size="12" fill="#00f" textLength="6" lengthAdjust="spacingAndGlyphs">4</text>
<rect x="124.500" y="682.500" width="22" height="20" fill="#c9e0f7" stroke="#99c9f4"/>
<rect x="128" y="685" width="14" height="14" fill="#c0c0c0"/>
<path d="M129 699.500h13.500v-14" stroke="#000" stroke-width="1" fill="none" shape-rendering="crispEdges"/>
<text x="133.5" y="697" font-size="12" fill="#00f" textLength="6" lengthAdjust="spacingAndGlyphs">5</text>
<rect x="147.500" y="682.500" width="22" height="20" fill="#c9e0f7" stroke="#99c9f4"/>
<rect x="151" y="685" width="14" height="14" fill="#c0c0c0"/>
<path d="M152 699.500h13.500v-14" stroke="#000" stroke-width="1" fill="none" shape-rendering="crispEdges"/>
<text x="156.5" y="697" font-size="12" fill="#00f" textLength="6" lengthAdjust="spacingAndGlyphs">6</text>
<rect x="170.500" y="682.500" width="22" height="20" fill="#c9e0f7" stroke="#99c9f4"/>
<rect x="174" y="685" width="14" height="14" fill="#c0c0c0"/>
<path d="M175 699.500h13.500v-14" stroke="#000" stroke-width="1" fill="none" shape-rendering="crispEdges"/>
<text x="179.5" y="697" font-size="12" fill="#00f" textLength="6" lengthAdjust="spacingAndGlyphs">7</text>
<rect x="193.500" y="682.500" width="22" height="20" fill="#c9e0f7" stroke="#99c9f4"/>
<rect x="197" y="685" width="14" height="14" fill="#c0c0c0"/>
<path d="M198 699.500h13.500v-14" stroke="#000" stroke-width="1" fill="none" shape-rendering="crispEdges"/>
<text x="202.5" y="697" font-size="12" fill="#00f" textLength="6" lengthAdjust="spacingAndGlyphs">8</text>
<rect x="216.500" y="682.500" width="22" height="20" fill="#c9e0f7" stroke="#99c9f4"/>
<rect x="220" y="685" width="14" height="14" fill="#c0c0c0"/>
<path d="M221 699.500h13.500v-14" stroke="#000" stroke-width="1" fill="none" shape-rendering="crispEdges"/>
<text x="225.5" y="697" font-size="12" fill="#00f" textLength="6" lengthAdjust="spacingAndGlyphs">9</text>
<rect x="239.500" y="682.500" width="22" height="20" fill="#c9e0f7" stroke="#99c9f4"/>
<rect x="243" y="685" width="14" height="14" fill="#c0c0c0"/>
<path d="M244 699.500h13.500v-14" stroke="#000" stroke-width="1" fill="none" shape-rendering="crispEdges"/>
<text x="245" y="697" font-size="12" fill="#00f" textLength="11.5" lengthAdjust="spacingAndGlyphs">10</text>
<rect x="262.500" y="682.500" width="22" height="20" fill="#c9e0f7" stroke="#99c9f4"/>
<rect x="266" y="685" width="14" height="14" fill="#c0c0c0"/>
<path d="M267 699.500h13.500v-14" stroke="#000" stroke-width="1" fill="none" shape-rendering="crispEdges"/>
<text x="268" y="697" font-size="12" fill="#00f" textLength="11.5" lengthAdjust="spacingAndGlyphs">11</text>
<rect x="285.500" y="682.500" width="22" height="20" fill="#c9e0f7" stroke="#99c9f4"/>
<rect x="289" y="685" width="14" height="14" fill="#c0c0c0"/>
<path d="M290 699.500h13.500v-14" stroke="#000" stroke-width="1" fill="none" shape-rendering="crispEdges"/>
<text x="291" y="697" font-size="12" fill="#00f" textLength="11.5" lengthAdjust="spacingAndGlyphs">12</text>
<rect x="308.500" y="682.500" width="22" height="20" fill="#c9e0f7" stroke="#99c9f4"/>
<rect x="312" y="685" width="14" height="14" fill="#c0c0c0"/>
<path d="M313 699.500h13.500v-14" stroke="#000" stroke-width="1" fill="none" shape-rendering="crispEdges"/>
<text x="314" y="697" font-size="12" fill="#00f" textLength="11.5" lengthAdjust="spacingAndGlyphs">13</text>
<rect x="331.500" y="682.500" width="22" height="20" fill="#c9e0f7" stroke="#99c9f4"/>
<rect x="335" y="685" width="14" height="14" fill="#c0c0c0"/>
<path d="M336 699.500h13.500v-14" stroke="#000" stroke-width="1" fill="none" shape-rendering="crispEdges"/>
<text x="337" y="697" font-size="12" fill="#00f" textLength="11.5" lengthAdjust="spacingAndGlyphs">14</text>
<rect x="354.500" y="682.500" width="22" height="20" fill="#c9e0f7" stroke="#99c9f4"/>
<rect x="358" y="685" width="14" height="14" fill="#c0c0c0"/>
<path d="M359 699.500h13.500v-14" stroke="#000" stroke-width="1" fill="none" shape-rendering="crispEdges"/>
<text x="360" y="697" font-size="12" fill="#00f" textLength="11.5" lengthAdjust="spacingAndGlyphs">15</text>
<rect x="377.500" y="682.500" width="22" height="20" fill="#c9e0f7" stroke="#99c9f4"/>
<rect x="381" y="685" width="14" height="14" fill="#c0c0c0"/>
<path d="M382 699.500h13.500v-14" stroke="#000" stroke-width="1" fill="none" shape-rendering="crispEdges"/>
<text x="383" y="697" font-size="12" fill="#00f" textLength="11.5" lengthAdjust="spacingAndGlyphs">16</text>
<rect x="400.500" y="682.500" width="22" height="20" fill="#c9e0f7" stroke="#99c9f4"/>
<rect x="404" y="685" width="14" height="14" fill="#c0c0c0"/>
<path d="M405 699.500h13.500v-14" stroke="#000" stroke-width="1" fill="none" shape-rendering="crispEdges"/>
<text x="406" y="697" font-size="12" fill="#00f" textLength="11.5" lengthAdjust="spacingAndGlyphs">17</text>
<rect x="423.500" y="682.500" width="22" height="20" fill="#c9e0f7" stroke="#99c9f4"/>
<rect x="427" y="685" width="14" height="14" fill="#c0c0c0"/>
<path d="M428 699.500h13.500v-14" stroke="#000" stroke-width="1" fill="none" shape-rendering="crispEdges"/>
<text x="429" y="697" font-size="12" fill="#00f" textLength="11.5" lengthAdjust="spacingAndGlyphs">18</text>
<rect x="446.500" y="682.500" width="22" height="20" fill="#c9e0f7" stroke="#99c9f4"/>
<rect x="450" y="685" width="14" height="14" fill="#c0c0c0"/>
<path d="M451 699.500h13.500v-14" stroke="#000" stroke-width="1" fill="none" shape-rendering="crispEdges"/>
<text x="452" y="697" font-size="12" fill="#00f" textLength="11.5" lengthAdjust="spacingAndGlyphs">19</text>
<rect x="469.500" y="682.500" width="22" height="20" fill="#c9e0f7" stroke="#99c9f4"/>
<rect x="473" y="685" width="14" height="14" fill="#c0c0c0"/>
<path d="M474 699.500h13.500v-14" stroke="#000" stroke-width="1" fill="none" shape-rendering="crispEdges"/>
<text x="475" y="697" font-size="12" fill="#00f" textLength="11.5" lengthAdjust="spacingAndGlyphs">20</text>
<rect x="492.500" y="682.500" width="22" height="20" fill="#c9e0f7" stroke="#99c9f4"/>
<rect x="496" y="685" width="14" height="14" fill="#c0c0c0"/>
<path d="M497 699.500h13.500v-14" stroke="#000" stroke-width="1" fill="none" shape-rendering="crispEdges"/>
<text x="498" y="697" font-size="12" fill="#00f" textLength="11.5" lengthAdjust="spacingAndGlyphs">21</text>
<rect x="515.500" y="682.500" width="22" height="20" fill="#c9e0f7" stroke="#99c9f4"/>
<rect x="519" y="685" width="14" height="14" fill="#c0c0c0"/>
<path d="M520 699.500h13.500v-14" stroke="#000" stroke-width="1" fill="none" shape-rendering="crispEdges"/>
<text x="521" y="697" font-size="12" fill="#00f" textLength="11.5" lengthAdjust="spacingAndGlyphs">22</text>
<rect x="538.500" y="682.500" width="22" height="20" fill="#c9e0f7" stroke="#99c9f4"/>
<rect x="542" y="685" width="14" height="14" fill="#c0c0c0"/>
<path d="M543 699.500h13.500v-14" stroke="#000" stroke-width="1" fill="none" shape-rendering="crispEdges"/>
<text x="544" y="697" font-size="12" fill="#00f" textLength="11.5" lengthAdjust="spacingAndGlyphs">23</text>
<rect x="561.500" y="682.500" width="22" height="20" fill="#c9e0f7" stroke="#99c9f4"/>
<rect x="565" y="685" width="14" height="14" fill="#c0c0c0"/>
<path d="M566 699.500h13.500v-14" stroke="#000" stroke-width="1" fill="none" shape-rendering="crispEdges"/>
<text x="567" y="697" font-size="12" fill="#00f" textLength="11.5" lengthAdjust="spacingAndGlyphs">24</text>
<rect x="584.500" y="682.500" width="22" height="20" fill="#c9e0f7" stroke="#99c9f4"/>
<rect x="588" y="685" width="14" height="14" fill="#c0c0c0"/>
<path d="M589 699.500h13.500v-14" stroke="#000" stroke-width="1" fill="none" shape-rendering="crispEdges"/>
<text x="590" y="697" font-size="12" fill="#00f" textLength="11.5" lengthAdjust="spacingAndGlyphs">25</text>
<rect x="607.500" y="682.500" width="22" height="20" fill="#c9e0f7" stroke="#99c9f4"/>
<rect x="611" y="685" width="14" height="14" fill="#c0c0c0"/>
<path d="M612 699.500h13.500v-14" stroke="#000" stroke-width="1" fill="none" shape-rendering="crispEdges"/>
<text x="613" y="697" font-size="12" fill="#00f" textLength="11.5" lengthAdjust="spacingAndGlyphs">26</text>
<rect x="630.500" y="682.500" width="22" height="20" fill="#c9e0f7" stroke="#99c9f4"/>
<rect x="634" y="685" width="14" height="14" fill="#c0c0c0"/>
<path d="M635 699.500h13.500v-14" stroke="#000" stroke-width="1" fill="none" shape-rendering="crispEdges"/>
<text x="636" y="697" font-size="12" fill="#00f" textLength="11.5" lengthAdjust="spacingAndGlyphs">27</text>
<rect x="653.500" y="682.500" width="22" height="20" fill="#c9e0f7" stroke="#99c9f4"/>
<rect x="657" y="685" width="14" height="14" fill="#c0c0c0"/>
<path d="M658 699.500h13.500v-14" stroke="#000" stroke-width="1" fill="none" shape-rendering="crispEdges"/>
<text x="659" y="697" font-size="12" fill="#00f" textLength="11.5" lengthAdjust="spacingAndGlyphs">28</text>
<rect x="676.500" y="682.500" width="22" height="20" fill="#c9e0f7" stroke="#99c9f4"/>
<rect x="680" y="685" width="14" height="14" fill="#c0c0c0"/>
<path d="M681 699.500h13.500v-14" stroke="#000" stroke-width="1" fill="none" shape-rendering="crispEdges"/>
<text x="682" y="697" font-size="12" fill="#00f" textLength="11.5" lengthAdjust="spacingAndGlyphs">29</text>
<rect x="699.500" y="682.500" width="22" height="20" fill="#c9e0f7" stroke="#99c9f4"/>
<rect x="703" y="685" width="14" height="14" fill="#c0c0c0"/>
<path d="M704 699.500h13.500v-14" stroke="#000" stroke-width="1" fill="none" shape-rendering="crispEdges"/>
<text x="705" y="697" font-size="12" fill="#00f" textLength="11.5" lengthAdjust="spacingAndGlyphs">30</text>
<path d="M37 694l4 4M41 694l-4 4" stroke="#000" stroke-width=".9"/>
<rect x="243.500" y="685" width="3.500" height="3.500" fill="#000"/>
<rect x="724" y="683" width="1" height="18" fill="#8e8e8e"/><rect x="725" y="684" width="1" height="18" fill="#fafafa"/>
<rect x="801" y="683" width="1" height="18" fill="#8e8e8e"/><rect x="802" y="684" width="1" height="18" fill="#fafafa"/>
<rect x="832" y="683" width="1" height="18" fill="#8e8e8e"/><rect x="833" y="684" width="1" height="18" fill="#fafafa"/>
<rect x="959" y="679" width="1" height="28" fill="#a0a0a0"/><rect x="960" y="679" width="1" height="28" fill="#fff"/>
<rect x="730.500" y="682.500" width="22" height="20" fill="#c9e0f7" stroke="#99c9f4"/>
<path d="M737.5 685.5h11l-3.500 3.500h-11z" fill="#008000" stroke="#000" stroke-width=".9"/><path d="M737.5 688.5h11l-3.500 3.500h-11z" fill="#e00000" stroke="#000" stroke-width=".9"/><path d="M737.5 691.5h11l-3.500 3.500h-11z" fill="#f0f000" stroke="#000" stroke-width=".9"/><path d="M737.5 694.5h11l-3.500 3.500h-11z" fill="#0000e0" stroke="#000" stroke-width=".9"/>
<path d="M760 685.5h11l-3.500 3.500h-11z" fill="#f0f0f0" stroke="#8c8c8c" stroke-width=".9"/><path d="M760 690.0h11l-3.500 3.500h-11z" fill="#f00000" stroke="#8c8c8c" stroke-width=".9"/><path d="M760 694.5h11l-3.500 3.500h-11z" fill="#f0f0f0" stroke="#8c8c8c" stroke-width=".9"/>
<path d="M783 685.5h11l-3.500 3.500h-11z" fill="#a8a8a8" stroke="#9c9c9c" stroke-width=".9"/><path d="M783 695.5h11l-3.500 3.500h-11z" fill="#f0f0f0" stroke="#9c9c9c" stroke-width=".9"/>
<path d="M787.500 690v6M785 693.500h5" stroke="#9c9c9c" fill="none"/>
<path d="M813 685.5h11l-3.500 3.500h-11z" fill="#00e8e8" stroke="#000" stroke-width=".9"/><path d="M813 689.0h11l-3.500 3.500h-11z" fill="#f0f000" stroke="#000" stroke-width=".9"/><path d="M813 692.5h11l-3.500 3.500h-11z" fill="#fff" stroke="#000" stroke-width=".9"/>
<text x="820" y="700" font-size="10" font-weight="bold" fill="#0000e0">?</text>
<rect x="841.500" y="686.500" width="15" height="13" rx="1.500" fill="none" stroke="#a8a8a8" stroke-width="1"/>
<rect x="843.500" y="688.500" width="11" height="9" fill="none" stroke="#a8a8a8" stroke-width="1"/>
<text x="849" y="696.500" font-size="10" fill="#9c9c9c" text-anchor="middle">1</text>
<rect x="864.500" y="686.500" width="15" height="13" rx="1.500" fill="none" stroke="#a8a8a8" stroke-width="1"/>
<rect x="866.500" y="688.500" width="11" height="9" fill="none" stroke="#a8a8a8" stroke-width="1"/>
<text x="872" y="696.500" font-size="10" fill="#9c9c9c" text-anchor="middle">2</text>
<rect x="887.500" y="686.500" width="15" height="13" rx="1.500" fill="none" stroke="#a8a8a8" stroke-width="1"/>
<rect x="889.500" y="688.500" width="11" height="9" fill="none" stroke="#a8a8a8" stroke-width="1"/>
<text x="895" y="696.500" font-size="10" fill="#9c9c9c" text-anchor="middle">3</text>
<rect x="910.500" y="686.500" width="15" height="13" rx="1.500" fill="none" stroke="#a8a8a8" stroke-width="1"/>
<rect x="912.500" y="688.500" width="11" height="9" fill="none" stroke="#a8a8a8" stroke-width="1"/>
<text x="918" y="696.500" font-size="10" fill="#9c9c9c" text-anchor="middle">4</text>
<rect x="933.500" y="686.500" width="15" height="13" rx="1.500" fill="none" stroke="#a8a8a8" stroke-width="1"/>
<rect x="935.500" y="688.500" width="11" height="9" fill="none" stroke="#a8a8a8" stroke-width="1"/>
<text x="941" y="696.500" font-size="10" fill="#9c9c9c" text-anchor="middle">5</text>
<rect x="0" y="707" width="1366" height="1" fill="#b8b8b8"/><rect x="0" y="708" width="1366" height="20" fill="#f0f0f0"/>
<text x="2" y="724" font-size="12" fill="#000" text-anchor="start" textLength="92" lengthAdjust="spacingAndGlyphs">Lista degli articoli</text>
<text x="926" y="724" font-size="12" fill="#000" text-anchor="start" textLength="151" lengthAdjust="spacingAndGlyphs">Lunghezza selezione:&#160; 0.00 m</text>
<text x="1210" y="724" font-size="12" fill="#000" text-anchor="start" textLength="47" lengthAdjust="spacingAndGlyphs">&lt;- 238 -&gt;</text>
<text x="1279" y="724" font-size="12" fill="#000" text-anchor="start" textLength="34" lengthAdjust="spacingAndGlyphs">-02575</text>
<text x="1325" y="724" font-size="12" fill="#000" text-anchor="start" textLength="37" lengthAdjust="spacingAndGlyphs">+00590</text>
<rect x="1203" y="711" width="1" height="16" fill="#d0d0d0"/>
<rect x="1272" y="711" width="1" height="16" fill="#d0d0d0"/>
<rect x="1319" y="711" width="1" height="16" fill="#d0d0d0"/>
<rect x="0" y="728" width="1366" height="40" fill="#04060a"/>
<rect x="48" y="728" width="344" height="40" fill="#333"/>
<path d="M16 742.300l6.500-.9v6.300h-6.500zM23.300 741.300l8.700-1.300v7.700h-8.700zM16 748.500h6.500v6.300l-6.500-.9zM23.300 748.500h8.700v7.700l-8.700-1.300z" fill="#fff"/>
<text x="60" y="753.5" font-size="15" fill="#a8a8a8" text-anchor="start" textLength="198" lengthAdjust="spacingAndGlyphs">Ricerca in Windows e nel Web</text>
<g stroke="#fff" stroke-width="1.300" fill="none"><rect x="410.500" y="740.500" width="11" height="14"/><path d="M408 742.500h-2.500v10h2.500M424 742.500h2.500v10h-2.500"/></g>
<text x="455.500" y="757.500" font-size="30" font-weight="bold" fill="#1e7fe0" textLength="21" lengthAdjust="spacingAndGlyphs">e</text>
<path d="M503.500 739h8l2 2.500h12.500v16h-22.500z" fill="#f4c84a"/><path d="M503.500 744h22.500v13.500h-22.500z" fill="#fbe08a"/><path d="M508 750h13.500v7.500h-4v-3.500h-5.500v3.500h-4z" fill="#3a9de8"/>
<path d="M553 742h21l-1.500 16.500h-18z" fill="#fff"/><path d="M559 742c0-5 9-5 9 0" fill="none" stroke="#fff" stroke-width="1.300"/><path d="M558.500 746.500h4.500v4.500h-4.500zM564 746.500h4.500v4.500h-4.500zM558.500 752h4.500v4.500h-4.500zM564 752h4.500v4.500h-4.500z" fill="#04060a"/>
<text x="602" y="757.500" font-size="30" font-weight="bold" fill="#3fb4f0" textLength="20" lengthAdjust="spacingAndGlyphs">e</text>
<ellipse cx="612" cy="747" rx="13.500" ry="5.500" transform="rotate(-28 612 747)" fill="none" stroke="#f2c21e" stroke-width="1.800"/>
<circle cx="661" cy="748" r="11.500" fill="#dc4437"/><path d="M661 748L651 753.800A11.500 11.500 0 0 0 661 759.500A11.500 11.500 0 0 0 666.800 758z" fill="#f9c01a"/><path d="M661 748L651 753.800A11.500 11.500 0 0 1 651.050 742.200z" fill="#1da462"/><path d="M661 748L656 757.500 661 759.500A11.500 11.500 0 0 0 671 742.500z" fill="#f9c01a"/><path d="M661 748L651 753.700A11.500 11.500 0 0 0 661 759.500L666.500 750z" fill="#1da462"/><path d="M661 742.500h10.600A11.500 11.500 0 0 0 651 742.300L656.300 751z" fill="#dc4437"/><circle cx="661" cy="748" r="5.300" fill="#fff"/><circle cx="661" cy="748" r="4.200" fill="#4a8af4"/>
<rect x="687" y="728" width="48" height="40" fill="#36383c"/>
<g shape-rendering="crispEdges"><path d="M700 749h22M700 752h22M700 755h22M700 758h22" stroke="#000" stroke-width="1.500"/><path d="M702 750.500h12M706 753.500h12M703 756.500h12" stroke="#e01818" stroke-width="1.500"/></g><path d="M699 744l14-3 9-4-2 5-12 5z" fill="#e0d000" stroke="#1a2a8a" stroke-width="1"/><rect x="713" y="743" width="10" height="9" fill="#fff"/><text x="713.500" y="751" font-size="9" font-weight="bold" fill="#1818d0" textLength="9" lengthAdjust="spacingAndGlyphs">12</text>
<ellipse cx="759" cy="750" rx="10.500" ry="8.500" fill="#d6dde6" transform="rotate(-20 759 750)"/><circle cx="754" cy="747" r="2" fill="#e03a2a"/><circle cx="759.500" cy="744.500" r="2" fill="#f0b020"/><circle cx="753" cy="752.500" r="2" fill="#2a78d8"/><circle cx="758" cy="755.500" r="2" fill="#35a84a"/><path d="M771 738l-8 15-1.500 5 4-3.500 8-15z" fill="#c88a3a"/><path d="M771 738l3 1.500-2.500 4.500-3-1.500z" fill="#e8a050"/>
<rect x="798.750" y="737.750" width="20.500" height="20.500" fill="none" stroke="#fff" stroke-width="1.500"/><path d="M798 758.500v-5.500l7-9 5 6.500 2.500-3 7 8v3z" fill="#fff"/>
<rect x="494.5" y="766" width="40.5" height="2" fill="#76b9ed"/>
<rect x="642" y="766" width="39" height="2" fill="#76b9ed"/>
<rect x="687" y="766" width="48" height="2" fill="#76b9ed"/>
<rect x="739.5" y="766" width="41.0" height="2" fill="#76b9ed"/>
<rect x="789" y="766" width="40.5" height="2" fill="#76b9ed"/>
<g stroke="#fff" fill="none"><path d="M1168.500 751l5.500-5.500 5.500 5.500" stroke-width="1.200"/><path d="M1190.500 742v3M1193.500 742v3M1189.500 745.500h5v2.500l-1.500 1.500h-2l-1.500-1.500zM1192 749.500v3.500" stroke-width="1"/><path d="M1195.500 745.500h9.500v7h-10M1205.500 747.500v3" stroke-width="1" stroke="#ccc"/><path d="M1198 747l4 4M1202 747l-4 4" stroke-width="1"/><path d="M1218 754a10 10 0 0 1 10-10.500M1221 754a7 7 0 0 1 7-7.500M1224 754a4 4 0 0 1 4-4.500" stroke-width="1.200" stroke="#bbb"/><path d="M1238.500 746h3l4-3.500v11l-4-3.500h-3z" stroke-width="1"/><path d="M1247.500 745.500a3.500 3.500 0 0 1 0 5M1249.500 743.500a6 6 0 0 1 0 9M1251.500 741.500a9 9 0 0 1 0 13" stroke-width="1"/></g>
<rect x="1227" y="752" width="2.500" height="2.500" fill="#fff"/>
<path d="M1262 740h16v13h-6l-2 2.500-2-2.500h-6z" fill="#fff"/><path d="M1265 743.500h10M1265 746h10M1265 748.500h6" stroke="#04060a" stroke-width="1"/>
<text x="1308.5" y="742.5" font-size="12" fill="#fff" text-anchor="start" textLength="26" lengthAdjust="spacingAndGlyphs">19:01</text>
<text x="1292" y="760" font-size="12" fill="#fff" text-anchor="start" textLength="58" lengthAdjust="spacingAndGlyphs">26/04/2016</text>
<rect x="1361" y="728" width="1" height="40" fill="#5a5a5a"/>
</svg>
</body></html>
